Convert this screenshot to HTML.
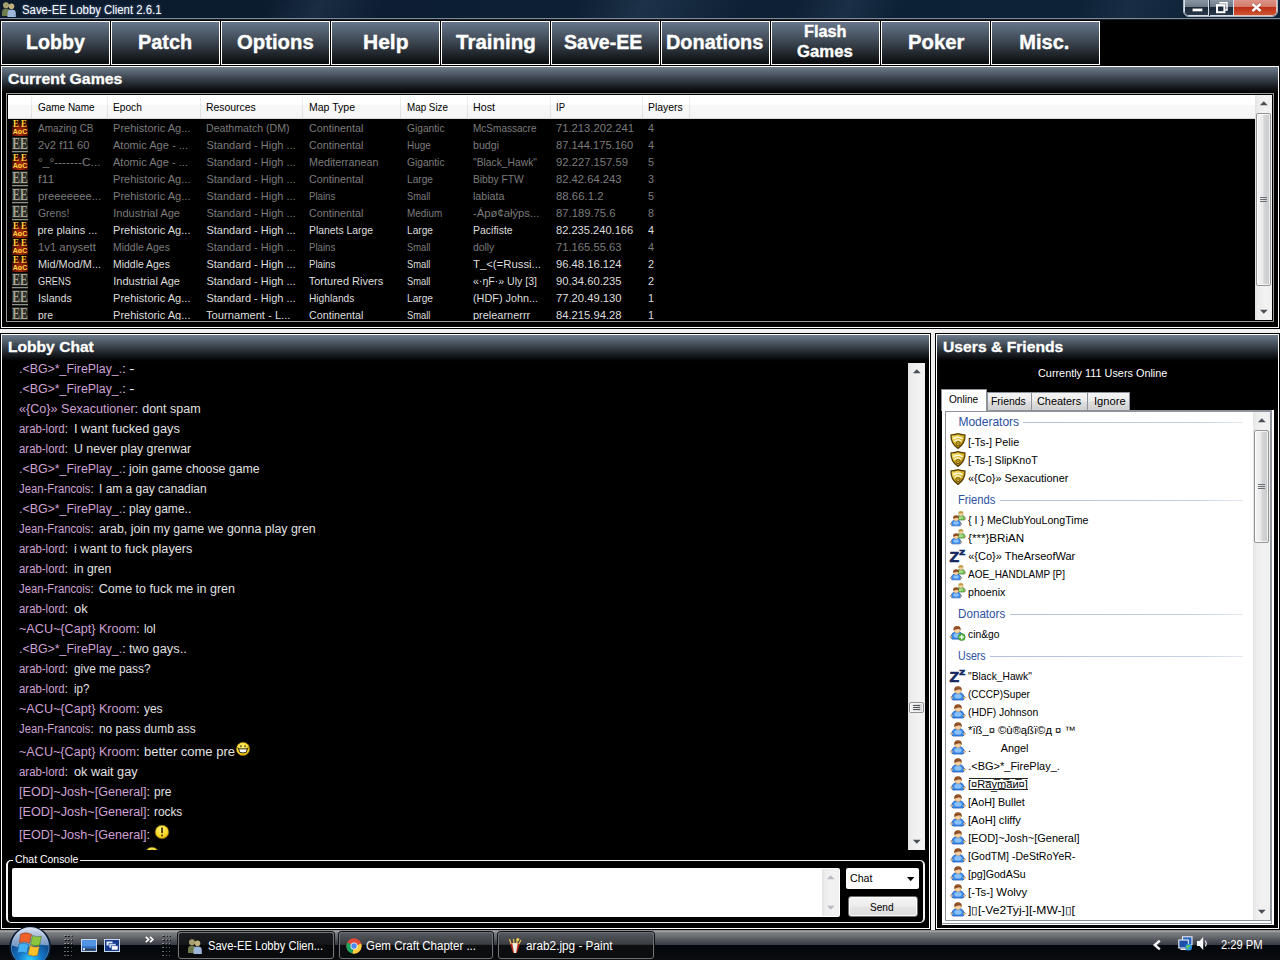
<!DOCTYPE html>
<html lang="en"><head><meta charset="utf-8"><title>Save-EE Lobby Client 2.6.1</title>
<style>
*{margin:0;padding:0;box-sizing:border-box}
html,body{width:1280px;height:960px;overflow:hidden;background:#000}
body{position:relative;font-family:'Liberation Sans',sans-serif;font-size:11px;color:#fff}
.a{position:absolute}
.t{position:absolute;white-space:pre;transform-origin:0 50%;display:block}
svg{position:absolute;overflow:visible}
</style></head>
<body>
<svg width="0" height="0" style="left:0;top:0"><defs><radialGradient id="ag" cx="50%" cy="75%" r="65%"><stop offset="0" stop-color="#c43a06"/><stop offset=".6" stop-color="#6e1402"/><stop offset="1" stop-color="#1c0500"/></radialGradient><radialGradient id="eg" cx="45%" cy="35%" r="70%"><stop offset="0" stop-color="#fff27a"/><stop offset=".7" stop-color="#f4d21f"/><stop offset="1" stop-color="#b98d0a"/></radialGradient><linearGradient id="sg" x1="0" y1="0" x2="1" y2="1"><stop offset="0" stop-color="#f9e873"/><stop offset=".5" stop-color="#e2b822"/><stop offset="1" stop-color="#9a6c08"/></linearGradient></defs></svg>
<div class="a" style="left:0px;top:0px;width:1280px;height:18px;background:linear-gradient(115deg,transparent 0%,transparent 21%,rgba(80,105,135,.2) 25%,transparent 30%,transparent 45%,rgba(80,105,135,.24) 50%,rgba(80,105,135,.12) 54%,transparent 58%,transparent 62%,rgba(80,105,135,.2) 66%,transparent 70%,transparent 84%,rgba(80,105,135,.16) 88%,transparent 93%),linear-gradient(90deg,#0b1a2d 0%,#0d2034 50%,#0e2338 100%)"></div>
<div class="a" style="left:0px;top:18px;width:1280px;height:1px;background:#7f8b98"></div>
<div class="a" style="left:0px;top:19px;width:1280px;height:1px;background:#141c26"></div>
<svg style="left:1px;top:1px" width="16" height="16" viewBox="0 0 16 16"><circle cx="5" cy="4.2" r="3" fill="#a8a070"/><path d="M1 15V11Q1 7.5 5 7.5Q9 7.5 9 11V15Z" fill="#6d7a4a"/><circle cx="10.5" cy="5.2" r="2.8" fill="#c0b27c"/><path d="M6.5 16V12Q6.5 8.6 10.5 8.6Q14.8 8.6 14.8 12V16Z" fill="#9db7d8"/></svg>
<span class="t" style="font:12px 'Liberation Sans',sans-serif;left:21.5px;top:1.5px;height:16px;line-height:16px;color:#fff;transform:scaleX(0.946);text-shadow:0 0 3px rgba(170,200,255,.55);">Save-EE Lobby Client 2.6.1</span>
<div class="a" style="left:1183px;top:-4px;width:95px;height:21px;border:1px solid #aeb9c6;border-radius:0 0 6px 6px;background:#223244;overflow:hidden"><div class="a" style="left:0;top:3px;width:25px;height:16px;border:1px solid #d6dde6;border-top:0;border-radius:0 0 0 4px;background:linear-gradient(#8b96a3 0%,#6f7a88 45%,#1b2939 50%,#28384a 100%)"></div><div class="a" style="left:26px;top:3px;width:24px;height:16px;border:1px solid #d6dde6;border-top:0;border-left:0;background:linear-gradient(#8b96a3 0%,#6f7a88 45%,#1b2939 50%,#28384a 100%)"></div><div class="a" style="left:50px;top:3px;width:43px;height:16px;border:1px solid #e6c4bc;border-top:0;border-left:0;border-radius:0 0 4px 0;background:linear-gradient(#dc9488 0%,#d27a6a 45%,#bd2f14 50%,#cf5434 100%)"></div></div><svg style="left:1191.5px;top:7.5px" width="11" height="4" viewBox="0 0 11 4"><rect x=".3" y=".3" width="10.2" height="3.2" fill="#fff" stroke="#3c4654" stroke-width=".5"/></svg><svg style="left:1215.5px;top:1.5px" width="12" height="11" viewBox="0 0 12 11"><path d="M3.4 .7H11V8H9" fill="none" stroke="#fff" stroke-width="1.5"/><rect x="1" y="3.2" width="7.4" height="7" fill="none" stroke="#fff" stroke-width="2"/></svg><svg style="left:1250.5px;top:2.5px" width="11" height="9" viewBox="0 0 11 9"><path d="M1.4 1L9.6 8M9.6 1L1.4 8" stroke="#4a2018" stroke-width="3.6" opacity=".5"/><path d="M1.4 1L9.6 8M9.6 1L1.4 8" stroke="#fff" stroke-width="2.4"/></svg>
<div class="a" style="left:1px;top:21px;width:109px;height:44px;border:1px solid #fff;background:linear-gradient(#66768b 0%,#3a434d 50%,#090b0d 100%)"></div>
<span class="t" style="font:bold 20px 'Liberation Sans',sans-serif;left:25.6px;top:28.9px;height:26px;line-height:26px;color:#fff;transform:scaleX(0.982);-webkit-text-stroke:.35px #fff;">Lobby</span>
<div class="a" style="left:111px;top:21px;width:109px;height:44px;border:1px solid #fff;background:linear-gradient(#66768b 0%,#3a434d 50%,#090b0d 100%)"></div>
<span class="t" style="font:bold 20px 'Liberation Sans',sans-serif;left:137.8px;top:28.9px;height:26px;line-height:26px;color:#fff;transform:scaleX(0.995);-webkit-text-stroke:.35px #fff;">Patch</span>
<div class="a" style="left:221px;top:21px;width:109px;height:44px;border:1px solid #fff;background:linear-gradient(#66768b 0%,#3a434d 50%,#090b0d 100%)"></div>
<span class="t" style="font:bold 20px 'Liberation Sans',sans-serif;left:236.9px;top:28.9px;height:26px;line-height:26px;color:#fff;transform:scaleX(1.015);-webkit-text-stroke:.35px #fff;">Options</span>
<div class="a" style="left:331px;top:21px;width:109px;height:44px;border:1px solid #fff;background:linear-gradient(#66768b 0%,#3a434d 50%,#090b0d 100%)"></div>
<span class="t" style="font:bold 20px 'Liberation Sans',sans-serif;left:362.7px;top:28.9px;height:26px;line-height:26px;color:#fff;transform:scaleX(1.050);-webkit-text-stroke:.35px #fff;">Help</span>
<div class="a" style="left:441px;top:21px;width:109px;height:44px;border:1px solid #fff;background:linear-gradient(#66768b 0%,#3a434d 50%,#090b0d 100%)"></div>
<span class="t" style="font:bold 20px 'Liberation Sans',sans-serif;left:455.5px;top:28.9px;height:26px;line-height:26px;color:#fff;transform:scaleX(1.026);-webkit-text-stroke:.35px #fff;">Training</span>
<div class="a" style="left:551px;top:21px;width:109px;height:44px;border:1px solid #fff;background:linear-gradient(#66768b 0%,#3a434d 50%,#090b0d 100%)"></div>
<span class="t" style="font:bold 20px 'Liberation Sans',sans-serif;left:564.4px;top:28.9px;height:26px;line-height:26px;color:#fff;transform:scaleX(0.980);-webkit-text-stroke:.35px #fff;">Save-EE</span>
<div class="a" style="left:661px;top:21px;width:109px;height:44px;border:1px solid #fff;background:linear-gradient(#66768b 0%,#3a434d 50%,#090b0d 100%)"></div>
<span class="t" style="font:bold 20px 'Liberation Sans',sans-serif;left:665.9px;top:28.9px;height:26px;line-height:26px;color:#fff;transform:scaleX(0.995);-webkit-text-stroke:.35px #fff;">Donations</span>
<div class="a" style="left:771px;top:21px;width:109px;height:44px;border:1px solid #fff;background:linear-gradient(#66768b 0%,#3a434d 50%,#090b0d 100%)"></div>
<span class="t" style="font:bold 16px 'Liberation Sans',sans-serif;left:803.6px;top:22.2px;height:20px;line-height:20px;color:#fff;transform:scaleX(1.019);-webkit-text-stroke:.35px #fff;">Flash</span>
<span class="t" style="font:bold 16px 'Liberation Sans',sans-serif;left:796.7px;top:42.2px;height:20px;line-height:20px;color:#fff;transform:scaleX(1.044);-webkit-text-stroke:.35px #fff;">Games</span>
<div class="a" style="left:881px;top:21px;width:109px;height:44px;border:1px solid #fff;background:linear-gradient(#66768b 0%,#3a434d 50%,#090b0d 100%)"></div>
<span class="t" style="font:bold 20px 'Liberation Sans',sans-serif;left:907.5px;top:28.9px;height:26px;line-height:26px;color:#fff;transform:scaleX(1.016);-webkit-text-stroke:.35px #fff;">Poker</span>
<div class="a" style="left:991px;top:21px;width:109px;height:44px;border:1px solid #fff;background:linear-gradient(#66768b 0%,#3a434d 50%,#090b0d 100%)"></div>
<span class="t" style="font:bold 20px 'Liberation Sans',sans-serif;left:1019.3px;top:28.9px;height:26px;line-height:26px;color:#fff;-webkit-text-stroke:.35px #fff;">Misc.</span>
<div class="a" style="left:1px;top:66px;width:1278px;height:262px;border:1px solid #fff;background:#000"></div><div class="a" style="left:2px;top:67px;width:1276px;height:26px;background:linear-gradient(#6e7c8d 0%,#56626f 20%,#343c45 50%,#14171b 80%,#000 100%)"></div><span class="t" style="font:bold 15px 'Liberation Sans',sans-serif;left:7.6px;top:67.5px;height:22px;line-height:22px;color:#fff;transform:scaleX(1.055);-webkit-text-stroke:.3px #fff;">Current Games</span>
<div class="a" style="left:1px;top:334px;width:929px;height:595px;border:1px solid #fff;background:#000"></div><div class="a" style="left:2px;top:335px;width:927px;height:26px;background:linear-gradient(#6e7c8d 0%,#56626f 20%,#343c45 50%,#14171b 80%,#000 100%)"></div><span class="t" style="font:bold 15px 'Liberation Sans',sans-serif;left:7.6px;top:335.5px;height:22px;line-height:22px;color:#fff;transform:scaleX(1.040);-webkit-text-stroke:.3px #fff;">Lobby Chat</span>
<div class="a" style="left:936px;top:334px;width:343px;height:595px;border:1px solid #fff;background:#000"></div><div class="a" style="left:937px;top:335px;width:341px;height:26px;background:linear-gradient(#6e7c8d 0%,#56626f 20%,#343c45 50%,#14171b 80%,#000 100%)"></div><span class="t" style="font:bold 15px 'Liberation Sans',sans-serif;left:942.6px;top:335.5px;height:22px;line-height:22px;color:#fff;transform:scaleX(1.046);-webkit-text-stroke:.3px #fff;">Users &amp; Friends</span>
<div class="a" style="left:0px;top:329px;width:1280px;height:4px;background:#f0f0f0"></div>
<div class="a" style="left:931px;top:329px;width:4px;height:601px;background:#f0f0f0"></div>
<div class="a" style="left:6px;top:93px;width:1268px;height:229px;border:1px solid #9a9a9a;background:#000"></div>
<div class="a" style="left:8px;top:95px;width:1247px;height:225px;overflow:hidden"><div class="a" style="left:0px;top:0px;width:1247px;height:24px;background:linear-gradient(#fff 0%,#fff 40%,#f8f8f8 45%,#f5f5f5 100%);border-bottom:1px solid #dadada"></div><div class="a" style="left:23px;top:0px;width:1px;height:23px;background:linear-gradient(#f2f2f2,#dcdcdc)"></div><div class="a" style="left:99px;top:0px;width:1px;height:23px;background:linear-gradient(#f2f2f2,#dcdcdc)"></div><div class="a" style="left:192px;top:0px;width:1px;height:23px;background:linear-gradient(#f2f2f2,#dcdcdc)"></div><div class="a" style="left:294px;top:0px;width:1px;height:23px;background:linear-gradient(#f2f2f2,#dcdcdc)"></div><div class="a" style="left:392px;top:0px;width:1px;height:23px;background:linear-gradient(#f2f2f2,#dcdcdc)"></div><div class="a" style="left:459px;top:0px;width:1px;height:23px;background:linear-gradient(#f2f2f2,#dcdcdc)"></div><div class="a" style="left:542px;top:0px;width:1px;height:23px;background:linear-gradient(#f2f2f2,#dcdcdc)"></div><div class="a" style="left:634px;top:0px;width:1px;height:23px;background:linear-gradient(#f2f2f2,#dcdcdc)"></div><div class="a" style="left:681px;top:0px;width:1px;height:23px;background:linear-gradient(#f2f2f2,#dcdcdc)"></div><span class="t" style="font:11px 'Liberation Sans',sans-serif;left:29.5px;top:4.2px;height:16px;line-height:16px;color:#000;transform:scaleX(0.906);">Game Name</span><span class="t" style="font:11px 'Liberation Sans',sans-serif;left:105.3px;top:4.2px;height:16px;line-height:16px;color:#000;transform:scaleX(0.923);">Epoch</span><span class="t" style="font:11px 'Liberation Sans',sans-serif;left:198.4px;top:4.2px;height:16px;line-height:16px;color:#000;transform:scaleX(0.947);">Resources</span><span class="t" style="font:11px 'Liberation Sans',sans-serif;left:300.7px;top:4.2px;height:16px;line-height:16px;color:#000;transform:scaleX(0.956);">Map Type</span><span class="t" style="font:11px 'Liberation Sans',sans-serif;left:398.9px;top:4.2px;height:16px;line-height:16px;color:#000;transform:scaleX(0.894);">Map Size</span><span class="t" style="font:11px 'Liberation Sans',sans-serif;left:465.4px;top:4.2px;height:16px;line-height:16px;color:#000;transform:scaleX(0.972);">Host</span><span class="t" style="font:11px 'Liberation Sans',sans-serif;left:547.7px;top:4.2px;height:16px;line-height:16px;color:#000;transform:scaleX(0.865);">IP</span><span class="t" style="font:11px 'Liberation Sans',sans-serif;left:640.3px;top:4.2px;height:16px;line-height:16px;color:#000;transform:scaleX(0.946);">Players</span><svg style="left:4px;top:25px" width="16" height="16" viewBox="0 0 16 16"><rect width="16" height="16" fill="url(#ag)"/><text x="8" y="7" text-anchor="middle" font-family="Liberation Serif,serif" font-size="9.5" font-weight="bold" fill="#ffd23c" textLength="14" lengthAdjust="spacingAndGlyphs">E E</text><text x="8" y="14.2" text-anchor="middle" font-family="Liberation Sans,sans-serif" font-size="8" font-weight="bold" fill="#ffd84a" textLength="14.5" lengthAdjust="spacingAndGlyphs">AoC</text></svg><span class="t" style="font:11px 'Liberation Sans',sans-serif;left:29.5px;top:25.3px;height:16px;line-height:16px;color:#7c7c7c;transform:scaleX(0.908);">Amazing CB</span><span class="t" style="font:11px 'Liberation Sans',sans-serif;left:105.3px;top:25.3px;height:16px;line-height:16px;color:#7c7c7c;transform:scaleX(1.006);">Prehistoric Ag...</span><span class="t" style="font:11px 'Liberation Sans',sans-serif;left:198.4px;top:25.3px;height:16px;line-height:16px;color:#7c7c7c;transform:scaleX(0.962);">Deathmatch (DM)</span><span class="t" style="font:11px 'Liberation Sans',sans-serif;left:300.7px;top:25.3px;height:16px;line-height:16px;color:#7c7c7c;transform:scaleX(0.977);">Continental</span><span class="t" style="font:11px 'Liberation Sans',sans-serif;left:398.9px;top:25.3px;height:16px;line-height:16px;color:#7c7c7c;transform:scaleX(0.929);">Gigantic</span><span class="t" style="font:11px 'Liberation Sans',sans-serif;left:465.4px;top:25.3px;height:16px;line-height:16px;color:#7c7c7c;transform:scaleX(0.911);">McSmassacre</span><span class="t" style="font:11px 'Liberation Sans',sans-serif;left:547.7px;top:25.3px;height:16px;line-height:16px;color:#7c7c7c;transform:scaleX(1.020);">71.213.202.241</span><span class="t" style="font:11px 'Liberation Sans',sans-serif;left:640.3px;top:25.3px;height:16px;line-height:16px;color:#7c7c7c;transform:scaleX(0.980);">4</span><svg style="left:4px;top:42px" width="16" height="16" viewBox="0 0 16 16"><rect x="0" y="0" width="16" height="13.4" fill="#2a2b26"/><rect x="0" y="14" width="16" height="1.3" fill="#8f948a"/><text x="8" y="12.4" text-anchor="middle" font-family="Liberation Serif,serif" font-size="17" font-weight="bold" fill="#a5a394" textLength="15.6" lengthAdjust="spacingAndGlyphs">EE</text></svg><span class="t" style="font:11px 'Liberation Sans',sans-serif;left:29.5px;top:42.3px;height:16px;line-height:16px;color:#7c7c7c;transform:scaleX(1.019);">2v2 f11 60</span><span class="t" style="font:11px 'Liberation Sans',sans-serif;left:105.3px;top:42.3px;height:16px;line-height:16px;color:#7c7c7c;transform:scaleX(1.005);">Atomic Age - ...</span><span class="t" style="font:11px 'Liberation Sans',sans-serif;left:198.4px;top:42.3px;height:16px;line-height:16px;color:#7c7c7c;">Standard - High ...</span><span class="t" style="font:11px 'Liberation Sans',sans-serif;left:300.7px;top:42.3px;height:16px;line-height:16px;color:#7c7c7c;transform:scaleX(0.977);">Continental</span><span class="t" style="font:11px 'Liberation Sans',sans-serif;left:398.9px;top:42.3px;height:16px;line-height:16px;color:#7c7c7c;transform:scaleX(0.905);">Huge</span><span class="t" style="font:11px 'Liberation Sans',sans-serif;left:465.4px;top:42.3px;height:16px;line-height:16px;color:#7c7c7c;transform:scaleX(0.966);">budgi</span><span class="t" style="font:11px 'Liberation Sans',sans-serif;left:547.7px;top:42.3px;height:16px;line-height:16px;color:#7c7c7c;transform:scaleX(1.010);">87.144.175.160</span><span class="t" style="font:11px 'Liberation Sans',sans-serif;left:640.3px;top:42.3px;height:16px;line-height:16px;color:#7c7c7c;transform:scaleX(0.980);">4</span><svg style="left:4px;top:59px" width="16" height="16" viewBox="0 0 16 16"><rect width="16" height="16" fill="url(#ag)"/><text x="8" y="7" text-anchor="middle" font-family="Liberation Serif,serif" font-size="9.5" font-weight="bold" fill="#ffd23c" textLength="14" lengthAdjust="spacingAndGlyphs">E E</text><text x="8" y="14.2" text-anchor="middle" font-family="Liberation Sans,sans-serif" font-size="8" font-weight="bold" fill="#ffd84a" textLength="14.5" lengthAdjust="spacingAndGlyphs">AoC</text></svg><span class="t" style="font:11px 'Liberation Sans',sans-serif;left:29.5px;top:59.3px;height:16px;line-height:16px;color:#7c7c7c;transform:scaleX(1.084);">°_°-------C...</span><span class="t" style="font:11px 'Liberation Sans',sans-serif;left:105.3px;top:59.3px;height:16px;line-height:16px;color:#7c7c7c;transform:scaleX(1.005);">Atomic Age - ...</span><span class="t" style="font:11px 'Liberation Sans',sans-serif;left:198.4px;top:59.3px;height:16px;line-height:16px;color:#7c7c7c;">Standard - High ...</span><span class="t" style="font:11px 'Liberation Sans',sans-serif;left:300.7px;top:59.3px;height:16px;line-height:16px;color:#7c7c7c;transform:scaleX(0.978);">Mediterranean</span><span class="t" style="font:11px 'Liberation Sans',sans-serif;left:398.9px;top:59.3px;height:16px;line-height:16px;color:#7c7c7c;transform:scaleX(0.929);">Gigantic</span><span class="t" style="font:11px 'Liberation Sans',sans-serif;left:465.4px;top:59.3px;height:16px;line-height:16px;color:#7c7c7c;transform:scaleX(0.936);">"Black_Hawk"</span><span class="t" style="font:11px 'Liberation Sans',sans-serif;left:547.7px;top:59.3px;height:16px;line-height:16px;color:#7c7c7c;transform:scaleX(1.023);">92.227.157.59</span><span class="t" style="font:11px 'Liberation Sans',sans-serif;left:640.3px;top:59.3px;height:16px;line-height:16px;color:#7c7c7c;transform:scaleX(0.980);">5</span><svg style="left:4px;top:76px" width="16" height="16" viewBox="0 0 16 16"><rect x="0" y="0" width="16" height="13.4" fill="#2a2b26"/><rect x="0" y="14" width="16" height="1.3" fill="#8f948a"/><text x="8" y="12.4" text-anchor="middle" font-family="Liberation Serif,serif" font-size="17" font-weight="bold" fill="#a5a394" textLength="15.6" lengthAdjust="spacingAndGlyphs">EE</text></svg><span class="t" style="font:11px 'Liberation Sans',sans-serif;left:29.5px;top:76.3px;height:16px;line-height:16px;color:#7c7c7c;transform:scaleX(1.125);">f11</span><span class="t" style="font:11px 'Liberation Sans',sans-serif;left:105.3px;top:76.3px;height:16px;line-height:16px;color:#7c7c7c;transform:scaleX(1.006);">Prehistoric Ag...</span><span class="t" style="font:11px 'Liberation Sans',sans-serif;left:198.4px;top:76.3px;height:16px;line-height:16px;color:#7c7c7c;">Standard - High ...</span><span class="t" style="font:11px 'Liberation Sans',sans-serif;left:300.7px;top:76.3px;height:16px;line-height:16px;color:#7c7c7c;transform:scaleX(0.977);">Continental</span><span class="t" style="font:11px 'Liberation Sans',sans-serif;left:398.9px;top:76.3px;height:16px;line-height:16px;color:#7c7c7c;transform:scaleX(0.924);">Large</span><span class="t" style="font:11px 'Liberation Sans',sans-serif;left:465.4px;top:76.3px;height:16px;line-height:16px;color:#7c7c7c;transform:scaleX(0.930);">Bibby FTW</span><span class="t" style="font:11px 'Liberation Sans',sans-serif;left:547.7px;top:76.3px;height:16px;line-height:16px;color:#7c7c7c;transform:scaleX(1.021);">82.42.64.243</span><span class="t" style="font:11px 'Liberation Sans',sans-serif;left:640.3px;top:76.3px;height:16px;line-height:16px;color:#7c7c7c;transform:scaleX(0.980);">3</span><svg style="left:4px;top:93px" width="16" height="16" viewBox="0 0 16 16"><rect x="0" y="0" width="16" height="13.4" fill="#2a2b26"/><rect x="0" y="14" width="16" height="1.3" fill="#8f948a"/><text x="8" y="12.4" text-anchor="middle" font-family="Liberation Serif,serif" font-size="17" font-weight="bold" fill="#a5a394" textLength="15.6" lengthAdjust="spacingAndGlyphs">EE</text></svg><span class="t" style="font:11px 'Liberation Sans',sans-serif;left:29.5px;top:93.3px;height:16px;line-height:16px;color:#7c7c7c;transform:scaleX(1.020);">preeeeeee...</span><span class="t" style="font:11px 'Liberation Sans',sans-serif;left:105.3px;top:93.3px;height:16px;line-height:16px;color:#7c7c7c;transform:scaleX(1.006);">Prehistoric Ag...</span><span class="t" style="font:11px 'Liberation Sans',sans-serif;left:198.4px;top:93.3px;height:16px;line-height:16px;color:#7c7c7c;">Standard - High ...</span><span class="t" style="font:11px 'Liberation Sans',sans-serif;left:300.7px;top:93.3px;height:16px;line-height:16px;color:#7c7c7c;transform:scaleX(0.878);">Plains</span><span class="t" style="font:11px 'Liberation Sans',sans-serif;left:398.9px;top:93.3px;height:16px;line-height:16px;color:#7c7c7c;transform:scaleX(0.850);">Small</span><span class="t" style="font:11px 'Liberation Sans',sans-serif;left:465.4px;top:93.3px;height:16px;line-height:16px;color:#7c7c7c;transform:scaleX(0.965);">labiata</span><span class="t" style="font:11px 'Liberation Sans',sans-serif;left:547.7px;top:93.3px;height:16px;line-height:16px;color:#7c7c7c;transform:scaleX(1.035);">88.66.1.2</span><span class="t" style="font:11px 'Liberation Sans',sans-serif;left:640.3px;top:93.3px;height:16px;line-height:16px;color:#7c7c7c;transform:scaleX(0.980);">5</span><svg style="left:4px;top:110px" width="16" height="16" viewBox="0 0 16 16"><rect x="0" y="0" width="16" height="13.4" fill="#2a2b26"/><rect x="0" y="14" width="16" height="1.3" fill="#8f948a"/><text x="8" y="12.4" text-anchor="middle" font-family="Liberation Serif,serif" font-size="17" font-weight="bold" fill="#a5a394" textLength="15.6" lengthAdjust="spacingAndGlyphs">EE</text></svg><span class="t" style="font:11px 'Liberation Sans',sans-serif;left:29.5px;top:110.3px;height:16px;line-height:16px;color:#7c7c7c;transform:scaleX(0.948);">Grens!</span><span class="t" style="font:11px 'Liberation Sans',sans-serif;left:105.3px;top:110.3px;height:16px;line-height:16px;color:#7c7c7c;">Industrial Age</span><span class="t" style="font:11px 'Liberation Sans',sans-serif;left:198.4px;top:110.3px;height:16px;line-height:16px;color:#7c7c7c;">Standard - High ...</span><span class="t" style="font:11px 'Liberation Sans',sans-serif;left:300.7px;top:110.3px;height:16px;line-height:16px;color:#7c7c7c;transform:scaleX(0.977);">Continental</span><span class="t" style="font:11px 'Liberation Sans',sans-serif;left:398.9px;top:110.3px;height:16px;line-height:16px;color:#7c7c7c;transform:scaleX(0.902);">Medium</span><span class="t" style="font:11px 'Liberation Sans',sans-serif;left:465.4px;top:110.3px;height:16px;line-height:16px;color:#7c7c7c;transform:scaleX(1.023);">-Ápø¢ałýps...</span><span class="t" style="font:11px 'Liberation Sans',sans-serif;left:547.7px;top:110.3px;height:16px;line-height:16px;color:#7c7c7c;transform:scaleX(1.022);">87.189.75.6</span><span class="t" style="font:11px 'Liberation Sans',sans-serif;left:640.3px;top:110.3px;height:16px;line-height:16px;color:#7c7c7c;transform:scaleX(0.980);">8</span><svg style="left:4px;top:127px" width="16" height="16" viewBox="0 0 16 16"><rect width="16" height="16" fill="url(#ag)"/><text x="8" y="7" text-anchor="middle" font-family="Liberation Serif,serif" font-size="9.5" font-weight="bold" fill="#ffd23c" textLength="14" lengthAdjust="spacingAndGlyphs">E E</text><text x="8" y="14.2" text-anchor="middle" font-family="Liberation Sans,sans-serif" font-size="8" font-weight="bold" fill="#ffd84a" textLength="14.5" lengthAdjust="spacingAndGlyphs">AoC</text></svg><span class="t" style="font:11px 'Liberation Sans',sans-serif;left:29.5px;top:127.3px;height:16px;line-height:16px;color:#dedede;">pre plains ...</span><span class="t" style="font:11px 'Liberation Sans',sans-serif;left:105.3px;top:127.3px;height:16px;line-height:16px;color:#dedede;transform:scaleX(1.006);">Prehistoric Ag...</span><span class="t" style="font:11px 'Liberation Sans',sans-serif;left:198.4px;top:127.3px;height:16px;line-height:16px;color:#dedede;">Standard - High ...</span><span class="t" style="font:11px 'Liberation Sans',sans-serif;left:300.7px;top:127.3px;height:16px;line-height:16px;color:#dedede;transform:scaleX(0.943);">Planets Large</span><span class="t" style="font:11px 'Liberation Sans',sans-serif;left:398.9px;top:127.3px;height:16px;line-height:16px;color:#dedede;transform:scaleX(0.924);">Large</span><span class="t" style="font:11px 'Liberation Sans',sans-serif;left:465.4px;top:127.3px;height:16px;line-height:16px;color:#dedede;transform:scaleX(0.955);">Pacifiste</span><span class="t" style="font:11px 'Liberation Sans',sans-serif;left:547.7px;top:127.3px;height:16px;line-height:16px;color:#dedede;transform:scaleX(1.010);">82.235.240.166</span><span class="t" style="font:11px 'Liberation Sans',sans-serif;left:640.3px;top:127.3px;height:16px;line-height:16px;color:#dedede;transform:scaleX(0.980);">4</span><svg style="left:4px;top:144px" width="16" height="16" viewBox="0 0 16 16"><rect width="16" height="16" fill="url(#ag)"/><text x="8" y="7" text-anchor="middle" font-family="Liberation Serif,serif" font-size="9.5" font-weight="bold" fill="#ffd23c" textLength="14" lengthAdjust="spacingAndGlyphs">E E</text><text x="8" y="14.2" text-anchor="middle" font-family="Liberation Sans,sans-serif" font-size="8" font-weight="bold" fill="#ffd84a" textLength="14.5" lengthAdjust="spacingAndGlyphs">AoC</text></svg><span class="t" style="font:11px 'Liberation Sans',sans-serif;left:29.5px;top:144.3px;height:16px;line-height:16px;color:#7c7c7c;transform:scaleX(1.027);">1v1 anysett</span><span class="t" style="font:11px 'Liberation Sans',sans-serif;left:105.3px;top:144.3px;height:16px;line-height:16px;color:#7c7c7c;transform:scaleX(0.949);">Middle Ages</span><span class="t" style="font:11px 'Liberation Sans',sans-serif;left:198.4px;top:144.3px;height:16px;line-height:16px;color:#7c7c7c;">Standard - High ...</span><span class="t" style="font:11px 'Liberation Sans',sans-serif;left:300.7px;top:144.3px;height:16px;line-height:16px;color:#7c7c7c;transform:scaleX(0.878);">Plains</span><span class="t" style="font:11px 'Liberation Sans',sans-serif;left:398.9px;top:144.3px;height:16px;line-height:16px;color:#7c7c7c;transform:scaleX(0.850);">Small</span><span class="t" style="font:11px 'Liberation Sans',sans-serif;left:465.4px;top:144.3px;height:16px;line-height:16px;color:#7c7c7c;transform:scaleX(0.941);">dolly</span><span class="t" style="font:11px 'Liberation Sans',sans-serif;left:547.7px;top:144.3px;height:16px;line-height:16px;color:#7c7c7c;transform:scaleX(1.021);">71.165.55.63</span><span class="t" style="font:11px 'Liberation Sans',sans-serif;left:640.3px;top:144.3px;height:16px;line-height:16px;color:#7c7c7c;transform:scaleX(0.980);">4</span><svg style="left:4px;top:161px" width="16" height="16" viewBox="0 0 16 16"><rect width="16" height="16" fill="url(#ag)"/><text x="8" y="7" text-anchor="middle" font-family="Liberation Serif,serif" font-size="9.5" font-weight="bold" fill="#ffd23c" textLength="14" lengthAdjust="spacingAndGlyphs">E E</text><text x="8" y="14.2" text-anchor="middle" font-family="Liberation Sans,sans-serif" font-size="8" font-weight="bold" fill="#ffd84a" textLength="14.5" lengthAdjust="spacingAndGlyphs">AoC</text></svg><span class="t" style="font:11px 'Liberation Sans',sans-serif;left:29.5px;top:161.3px;height:16px;line-height:16px;color:#dedede;transform:scaleX(0.991);">Mid/Mod/M...</span><span class="t" style="font:11px 'Liberation Sans',sans-serif;left:105.3px;top:161.3px;height:16px;line-height:16px;color:#dedede;transform:scaleX(0.949);">Middle Ages</span><span class="t" style="font:11px 'Liberation Sans',sans-serif;left:198.4px;top:161.3px;height:16px;line-height:16px;color:#dedede;">Standard - High ...</span><span class="t" style="font:11px 'Liberation Sans',sans-serif;left:300.7px;top:161.3px;height:16px;line-height:16px;color:#dedede;transform:scaleX(0.878);">Plains</span><span class="t" style="font:11px 'Liberation Sans',sans-serif;left:398.9px;top:161.3px;height:16px;line-height:16px;color:#dedede;transform:scaleX(0.850);">Small</span><span class="t" style="font:11px 'Liberation Sans',sans-serif;left:465.4px;top:161.3px;height:16px;line-height:16px;color:#dedede;transform:scaleX(1.030);">T_&lt;(=Russi...</span><span class="t" style="font:11px 'Liberation Sans',sans-serif;left:547.7px;top:161.3px;height:16px;line-height:16px;color:#dedede;transform:scaleX(1.021);">96.48.16.124</span><span class="t" style="font:11px 'Liberation Sans',sans-serif;left:640.3px;top:161.3px;height:16px;line-height:16px;color:#dedede;transform:scaleX(0.980);">2</span><svg style="left:4px;top:178px" width="16" height="16" viewBox="0 0 16 16"><rect x="0" y="0" width="16" height="13.4" fill="#2a2b26"/><rect x="0" y="14" width="16" height="1.3" fill="#8f948a"/><text x="8" y="12.4" text-anchor="middle" font-family="Liberation Serif,serif" font-size="17" font-weight="bold" fill="#a5a394" textLength="15.6" lengthAdjust="spacingAndGlyphs">EE</text></svg><span class="t" style="font:11px 'Liberation Sans',sans-serif;left:29.5px;top:178.3px;height:16px;line-height:16px;color:#dedede;transform:scaleX(0.838);">GRENS</span><span class="t" style="font:11px 'Liberation Sans',sans-serif;left:105.3px;top:178.3px;height:16px;line-height:16px;color:#dedede;">Industrial Age</span><span class="t" style="font:11px 'Liberation Sans',sans-serif;left:198.4px;top:178.3px;height:16px;line-height:16px;color:#dedede;">Standard - High ...</span><span class="t" style="font:11px 'Liberation Sans',sans-serif;left:300.7px;top:178.3px;height:16px;line-height:16px;color:#dedede;">Tortured Rivers</span><span class="t" style="font:11px 'Liberation Sans',sans-serif;left:398.9px;top:178.3px;height:16px;line-height:16px;color:#dedede;transform:scaleX(0.850);">Small</span><span class="t" style="font:11px 'Liberation Sans',sans-serif;left:465.4px;top:178.3px;height:16px;line-height:16px;color:#dedede;transform:scaleX(0.960);">«·ŋF·» Uly [3]</span><span class="t" style="font:11px 'Liberation Sans',sans-serif;left:547.7px;top:178.3px;height:16px;line-height:16px;color:#dedede;transform:scaleX(1.021);">90.34.60.235</span><span class="t" style="font:11px 'Liberation Sans',sans-serif;left:640.3px;top:178.3px;height:16px;line-height:16px;color:#dedede;transform:scaleX(0.980);">2</span><svg style="left:4px;top:195px" width="16" height="16" viewBox="0 0 16 16"><rect x="0" y="0" width="16" height="13.4" fill="#2a2b26"/><rect x="0" y="14" width="16" height="1.3" fill="#8f948a"/><text x="8" y="12.4" text-anchor="middle" font-family="Liberation Serif,serif" font-size="17" font-weight="bold" fill="#a5a394" textLength="15.6" lengthAdjust="spacingAndGlyphs">EE</text></svg><span class="t" style="font:11px 'Liberation Sans',sans-serif;left:29.5px;top:195.3px;height:16px;line-height:16px;color:#dedede;transform:scaleX(0.970);">Islands</span><span class="t" style="font:11px 'Liberation Sans',sans-serif;left:105.3px;top:195.3px;height:16px;line-height:16px;color:#dedede;transform:scaleX(1.006);">Prehistoric Ag...</span><span class="t" style="font:11px 'Liberation Sans',sans-serif;left:198.4px;top:195.3px;height:16px;line-height:16px;color:#dedede;">Standard - High ...</span><span class="t" style="font:11px 'Liberation Sans',sans-serif;left:300.7px;top:195.3px;height:16px;line-height:16px;color:#dedede;transform:scaleX(0.926);">Highlands</span><span class="t" style="font:11px 'Liberation Sans',sans-serif;left:398.9px;top:195.3px;height:16px;line-height:16px;color:#dedede;transform:scaleX(0.924);">Large</span><span class="t" style="font:11px 'Liberation Sans',sans-serif;left:465.4px;top:195.3px;height:16px;line-height:16px;color:#dedede;transform:scaleX(0.985);">(HDF) John...</span><span class="t" style="font:11px 'Liberation Sans',sans-serif;left:547.7px;top:195.3px;height:16px;line-height:16px;color:#dedede;transform:scaleX(1.021);">77.20.49.130</span><span class="t" style="font:11px 'Liberation Sans',sans-serif;left:640.3px;top:195.3px;height:16px;line-height:16px;color:#dedede;transform:scaleX(0.980);">1</span><svg style="left:4px;top:212px" width="16" height="16" viewBox="0 0 16 16"><rect x="0" y="0" width="16" height="13.4" fill="#2a2b26"/><rect x="0" y="14" width="16" height="1.3" fill="#8f948a"/><text x="8" y="12.4" text-anchor="middle" font-family="Liberation Serif,serif" font-size="17" font-weight="bold" fill="#a5a394" textLength="15.6" lengthAdjust="spacingAndGlyphs">EE</text></svg><span class="t" style="font:11px 'Liberation Sans',sans-serif;left:29.5px;top:212.3px;height:16px;line-height:16px;color:#dedede;transform:scaleX(0.943);">pre</span><span class="t" style="font:11px 'Liberation Sans',sans-serif;left:105.3px;top:212.3px;height:16px;line-height:16px;color:#dedede;transform:scaleX(1.006);">Prehistoric Ag...</span><span class="t" style="font:11px 'Liberation Sans',sans-serif;left:198.4px;top:212.3px;height:16px;line-height:16px;color:#dedede;transform:scaleX(1.015);">Tournament - L...</span><span class="t" style="font:11px 'Liberation Sans',sans-serif;left:300.7px;top:212.3px;height:16px;line-height:16px;color:#dedede;transform:scaleX(0.977);">Continental</span><span class="t" style="font:11px 'Liberation Sans',sans-serif;left:398.9px;top:212.3px;height:16px;line-height:16px;color:#dedede;transform:scaleX(0.850);">Small</span><span class="t" style="font:11px 'Liberation Sans',sans-serif;left:465.4px;top:212.3px;height:16px;line-height:16px;color:#dedede;transform:scaleX(0.995);">prelearnerrr</span><span class="t" style="font:11px 'Liberation Sans',sans-serif;left:547.7px;top:212.3px;height:16px;line-height:16px;color:#dedede;transform:scaleX(1.021);">84.215.94.28</span><span class="t" style="font:11px 'Liberation Sans',sans-serif;left:640.3px;top:212.3px;height:16px;line-height:16px;color:#dedede;transform:scaleX(0.980);">1</span></div>
<div class="a" style="left:1255px;top:95px;width:17px;height:225px;background:linear-gradient(90deg,#e3e3e3 0%,#ededed 20%,#f2f2f2 60%,#f0f0f0 100%)"><svg style="left:0;top:0" width="17" height="17" viewBox="0 0 17 17"><path d="M4.9 10.2L8.8 6.2L12.7 10.2Z" fill="#4a4f58"/></svg><svg style="left:0;top:208px" width="17" height="17" viewBox="0 0 17 17"><path d="M4.9 6.8L8.8 10.8L12.7 6.8Z" fill="#4a4f58"/></svg><div class="a" style="left:1px;top:18px;width:15px;height:173px;border:1px solid #959595;border-radius:2px;background:linear-gradient(90deg,#f6f6f6 0%,#e9e9ea 45%,#d4d5d7 55%,#c9cacc 100%);box-shadow:inset 0 0 0 1px rgba(255,255,255,.7)"></div><div class="a" style="left:5px;top:102px;width:7px;height:1px;background:#6b6f75"></div><div class="a" style="left:5px;top:104px;width:7px;height:1px;background:#6b6f75"></div><div class="a" style="left:5px;top:106px;width:7px;height:1px;background:#6b6f75"></div></div>
<div class="a" style="left:0px;top:0px;width:931px;height:850px;overflow:hidden"><span class="t" style="font:12.5px 'Liberation Sans',sans-serif;left:18.8px;top:358.5px;height:20px;line-height:20px;color:#cfa2d4;transform:scaleX(0.990);">.&lt;BG&gt;*_FirePlay_.<span style="color:#e2e2e2">:</span></span><span class="t" style="font:12.5px 'Liberation Sans',sans-serif;left:128.6px;top:358.5px;height:20px;line-height:20px;color:#e2e2e2;transform:scaleX(1.342);">-</span><span class="t" style="font:12.5px 'Liberation Sans',sans-serif;left:18.8px;top:378.5px;height:20px;line-height:20px;color:#cfa2d4;transform:scaleX(0.990);">.&lt;BG&gt;*_FirePlay_.<span style="color:#e2e2e2">:</span></span><span class="t" style="font:12.5px 'Liberation Sans',sans-serif;left:128.6px;top:378.5px;height:20px;line-height:20px;color:#e2e2e2;transform:scaleX(1.342);">-</span><span class="t" style="font:12.5px 'Liberation Sans',sans-serif;left:18.8px;top:398.5px;height:20px;line-height:20px;color:#cfa2d4;transform:scaleX(1.008);">«{Co}» Sexacutioner<span style="color:#e2e2e2">:</span></span><span class="t" style="font:12.5px 'Liberation Sans',sans-serif;left:142.2px;top:398.5px;height:20px;line-height:20px;color:#e2e2e2;">dont spam</span><span class="t" style="font:12.5px 'Liberation Sans',sans-serif;left:18.8px;top:418.5px;height:20px;line-height:20px;color:#cfa2d4;transform:scaleX(0.912);">arab-lord<span style="color:#e2e2e2">:</span></span><span class="t" style="font:12.5px 'Liberation Sans',sans-serif;left:73.6px;top:418.5px;height:20px;line-height:20px;color:#e2e2e2;transform:scaleX(1.022);">I want fucked gays</span><span class="t" style="font:12.5px 'Liberation Sans',sans-serif;left:18.8px;top:438.5px;height:20px;line-height:20px;color:#cfa2d4;transform:scaleX(0.912);">arab-lord<span style="color:#e2e2e2">:</span></span><span class="t" style="font:12.5px 'Liberation Sans',sans-serif;left:73.8px;top:438.5px;height:20px;line-height:20px;color:#e2e2e2;transform:scaleX(0.986);">U never play grenwar</span><span class="t" style="font:12.5px 'Liberation Sans',sans-serif;left:18.8px;top:458.5px;height:20px;line-height:20px;color:#cfa2d4;transform:scaleX(0.990);">.&lt;BG&gt;*_FirePlay_.<span style="color:#e2e2e2">:</span></span><span class="t" style="font:12.5px 'Liberation Sans',sans-serif;left:128.6px;top:458.5px;height:20px;line-height:20px;color:#e2e2e2;transform:scaleX(0.984);">join game choose game</span><span class="t" style="font:12.5px 'Liberation Sans',sans-serif;left:18.8px;top:478.5px;height:20px;line-height:20px;color:#cfa2d4;transform:scaleX(0.903);">Jean-Francois<span style="color:#e2e2e2">:</span></span><span class="t" style="font:12.5px 'Liberation Sans',sans-serif;left:98.8px;top:478.5px;height:20px;line-height:20px;color:#e2e2e2;transform:scaleX(0.956);">I am a gay canadian</span><span class="t" style="font:12.5px 'Liberation Sans',sans-serif;left:18.8px;top:498.5px;height:20px;line-height:20px;color:#cfa2d4;transform:scaleX(0.990);">.&lt;BG&gt;*_FirePlay_.<span style="color:#e2e2e2">:</span></span><span class="t" style="font:12.5px 'Liberation Sans',sans-serif;left:129.1px;top:498.5px;height:20px;line-height:20px;color:#e2e2e2;transform:scaleX(0.964);">play game..</span><span class="t" style="font:12.5px 'Liberation Sans',sans-serif;left:18.8px;top:518.5px;height:20px;line-height:20px;color:#cfa2d4;transform:scaleX(0.903);">Jean-Francois<span style="color:#e2e2e2">:</span></span><span class="t" style="font:12.5px 'Liberation Sans',sans-serif;left:98.8px;top:518.5px;height:20px;line-height:20px;color:#e2e2e2;transform:scaleX(0.990);">arab, join my game we gonna play gren</span><span class="t" style="font:12.5px 'Liberation Sans',sans-serif;left:18.8px;top:538.5px;height:20px;line-height:20px;color:#cfa2d4;transform:scaleX(0.912);">arab-lord<span style="color:#e2e2e2">:</span></span><span class="t" style="font:12.5px 'Liberation Sans',sans-serif;left:74px;top:538.5px;height:20px;line-height:20px;color:#e2e2e2;transform:scaleX(1.014);">i want to fuck players</span><span class="t" style="font:12.5px 'Liberation Sans',sans-serif;left:18.8px;top:558.5px;height:20px;line-height:20px;color:#cfa2d4;transform:scaleX(0.912);">arab-lord<span style="color:#e2e2e2">:</span></span><span class="t" style="font:12.5px 'Liberation Sans',sans-serif;left:74px;top:558.5px;height:20px;line-height:20px;color:#e2e2e2;transform:scaleX(0.978);">in gren</span><span class="t" style="font:12.5px 'Liberation Sans',sans-serif;left:18.8px;top:578.5px;height:20px;line-height:20px;color:#cfa2d4;transform:scaleX(0.903);">Jean-Francois<span style="color:#e2e2e2">:</span></span><span class="t" style="font:12.5px 'Liberation Sans',sans-serif;left:98.8px;top:578.5px;height:20px;line-height:20px;color:#e2e2e2;">Come to fuck me in gren</span><span class="t" style="font:12.5px 'Liberation Sans',sans-serif;left:18.8px;top:598.5px;height:20px;line-height:20px;color:#cfa2d4;transform:scaleX(0.912);">arab-lord<span style="color:#e2e2e2">:</span></span><span class="t" style="font:12.5px 'Liberation Sans',sans-serif;left:73.8px;top:598.5px;height:20px;line-height:20px;color:#e2e2e2;transform:scaleX(1.030);">ok</span><span class="t" style="font:12.5px 'Liberation Sans',sans-serif;left:18.8px;top:618.5px;height:20px;line-height:20px;color:#cfa2d4;transform:scaleX(1.009);">~ACU~{Capt} Kroom<span style="color:#e2e2e2">:</span></span><span class="t" style="font:12.5px 'Liberation Sans',sans-serif;left:143.8px;top:618.5px;height:20px;line-height:20px;color:#e2e2e2;transform:scaleX(0.927);">lol</span><span class="t" style="font:12.5px 'Liberation Sans',sans-serif;left:18.8px;top:638.5px;height:20px;line-height:20px;color:#cfa2d4;transform:scaleX(0.990);">.&lt;BG&gt;*_FirePlay_.<span style="color:#e2e2e2">:</span></span><span class="t" style="font:12.5px 'Liberation Sans',sans-serif;left:129.1px;top:638.5px;height:20px;line-height:20px;color:#e2e2e2;transform:scaleX(1.027);">two gays..</span><span class="t" style="font:12.5px 'Liberation Sans',sans-serif;left:18.8px;top:658.5px;height:20px;line-height:20px;color:#cfa2d4;transform:scaleX(0.912);">arab-lord<span style="color:#e2e2e2">:</span></span><span class="t" style="font:12.5px 'Liberation Sans',sans-serif;left:73.8px;top:658.5px;height:20px;line-height:20px;color:#e2e2e2;transform:scaleX(0.950);">give me pass?</span><span class="t" style="font:12.5px 'Liberation Sans',sans-serif;left:18.8px;top:678.5px;height:20px;line-height:20px;color:#cfa2d4;transform:scaleX(0.912);">arab-lord<span style="color:#e2e2e2">:</span></span><span class="t" style="font:12.5px 'Liberation Sans',sans-serif;left:74px;top:678.5px;height:20px;line-height:20px;color:#e2e2e2;transform:scaleX(0.923);">ip?</span><span class="t" style="font:12.5px 'Liberation Sans',sans-serif;left:18.8px;top:698.5px;height:20px;line-height:20px;color:#cfa2d4;transform:scaleX(1.009);">~ACU~{Capt} Kroom<span style="color:#e2e2e2">:</span></span><span class="t" style="font:12.5px 'Liberation Sans',sans-serif;left:143.8px;top:698.5px;height:20px;line-height:20px;color:#e2e2e2;transform:scaleX(0.956);">yes</span><span class="t" style="font:12.5px 'Liberation Sans',sans-serif;left:18.8px;top:718.5px;height:20px;line-height:20px;color:#cfa2d4;transform:scaleX(0.903);">Jean-Francois<span style="color:#e2e2e2">:</span></span><span class="t" style="font:12.5px 'Liberation Sans',sans-serif;left:98.8px;top:718.5px;height:20px;line-height:20px;color:#e2e2e2;transform:scaleX(0.952);">no pass dumb ass</span><span class="t" style="font:12.5px 'Liberation Sans',sans-serif;left:18.8px;top:742px;height:20px;line-height:20px;color:#cfa2d4;transform:scaleX(1.009);">~ACU~{Capt} Kroom<span style="color:#e2e2e2">:</span></span><span class="t" style="font:12.5px 'Liberation Sans',sans-serif;left:143.8px;top:742px;height:20px;line-height:20px;color:#e2e2e2;transform:scaleX(1.039);">better come pre</span><span class="t" style="font:12.5px 'Liberation Sans',sans-serif;left:18.8px;top:761.8px;height:20px;line-height:20px;color:#cfa2d4;transform:scaleX(0.912);">arab-lord<span style="color:#e2e2e2">:</span></span><span class="t" style="font:12.5px 'Liberation Sans',sans-serif;left:73.8px;top:761.8px;height:20px;line-height:20px;color:#e2e2e2;transform:scaleX(1.017);">ok wait gay</span><span class="t" style="font:12.5px 'Liberation Sans',sans-serif;left:18.8px;top:781.9px;height:20px;line-height:20px;color:#cfa2d4;transform:scaleX(1.008);">[EOD]~Josh~[General]<span style="color:#e2e2e2">:</span></span><span class="t" style="font:12.5px 'Liberation Sans',sans-serif;left:154.1px;top:781.9px;height:20px;line-height:20px;color:#e2e2e2;transform:scaleX(0.957);">pre</span><span class="t" style="font:12.5px 'Liberation Sans',sans-serif;left:18.8px;top:802px;height:20px;line-height:20px;color:#cfa2d4;transform:scaleX(1.008);">[EOD]~Josh~[General]<span style="color:#e2e2e2">:</span></span><span class="t" style="font:12.5px 'Liberation Sans',sans-serif;left:154.1px;top:802px;height:20px;line-height:20px;color:#e2e2e2;transform:scaleX(0.947);">rocks</span><span class="t" style="font:12.5px 'Liberation Sans',sans-serif;left:18.8px;top:824.6px;height:20px;line-height:20px;color:#cfa2d4;transform:scaleX(1.008);">[EOD]~Josh~[General]<span style="color:#e2e2e2">:</span></span><svg style="left:235.8px;top:741.7px" width="14" height="14" viewBox="0 0 14 14"><circle cx="7" cy="7" r="6.7" fill="url(#eg)" stroke="#8a6a08" stroke-width=".5"/><ellipse cx="5" cy="4.3" rx=".65" ry="1.15" fill="#2a1e03"/><ellipse cx="9" cy="4.3" rx=".65" ry="1.15" fill="#2a1e03"/><path d="M2.6 6.9H11.4L10.2 10.3Q7 11.6 3.8 10.3Z" fill="#fff" stroke="#231803" stroke-width=".9" stroke-linejoin="round"/><path d="M2.6 6.9L1.9 5.7M11.4 6.9L12.1 5.7" stroke="#231803" stroke-width=".9" stroke-linecap="round"/></svg><svg style="left:154.8px;top:824.9px" width="14" height="14" viewBox="0 0 14 14"><circle cx="7" cy="7" r="6.8" fill="url(#eg)" stroke="#8a6a08" stroke-width=".5"/><rect x="6.2" y="2.6" width="1.7" height="5.6" rx=".6" fill="#3a2a05"/><rect x="6.2" y="9.4" width="1.7" height="1.8" rx=".5" fill="#3a2a05"/></svg><svg style="left:144.8px;top:847.2px" width="14" height="14" viewBox="0 0 14 14"><circle cx="7" cy="7" r="6.8" fill="url(#eg)" stroke="#8a6a08" stroke-width=".5"/><rect x="6.2" y="2.6" width="1.7" height="5.6" rx=".6" fill="#3a2a05"/><rect x="6.2" y="9.4" width="1.7" height="1.8" rx=".5" fill="#3a2a05"/></svg></div>
<div class="a" style="left:908px;top:363px;width:17px;height:487px;background:linear-gradient(90deg,#e3e3e3 0%,#ededed 20%,#f2f2f2 60%,#f0f0f0 100%)"><svg style="left:0;top:0" width="17" height="17" viewBox="0 0 17 17"><path d="M4.9 10.2L8.8 6.2L12.7 10.2Z" fill="#4a4f58"/></svg><svg style="left:0;top:470px" width="17" height="17" viewBox="0 0 17 17"><path d="M4.9 6.8L8.8 10.8L12.7 6.8Z" fill="#4a4f58"/></svg></div>
<div class="a" style="left:909px;top:702px;width:15px;height:11px;border:1px solid #8f9297;border-radius:2px;background:linear-gradient(90deg,#f4f4f4,#dcdddf 55%,#cfd0d2);box-shadow:inset 0 0 0 1px rgba(255,255,255,.7)"><div class="a" style="left:3px;top:2px;width:7px;height:1px;background:#55585d"></div><div class="a" style="left:3px;top:4px;width:7px;height:1px;background:#55585d"></div><div class="a" style="left:3px;top:6px;width:7px;height:1px;background:#55585d"></div></div>
<div class="a" style="left:6px;top:859.5px;width:918.5px;height:63px;border:2px solid #f4f4f4;border-top-width:1.5px;border-bottom-width:1.5px;border-radius:5px"></div>
<div class="a" style="left:13px;top:853px;width:67px;height:12px;background:#000"></div>
<span class="t" style="font:11px 'Liberation Sans',sans-serif;left:15px;top:852px;height:14px;line-height:14px;color:#fff;transform:scaleX(0.950);">Chat Console</span>
<div class="a" style="left:12px;top:868px;width:828px;height:49px;background:#fff;border-radius:2px"></div>
<div class="a" style="left:822px;top:869px;width:17px;height:47px;background:linear-gradient(90deg,#e3e3e3 0%,#ededed 20%,#f2f2f2 60%,#f0f0f0 100%)"><svg style="left:0;top:0" width="17" height="17" viewBox="0 0 17 17"><path d="M4.9 10.2L8.8 6.2L12.7 10.2Z" fill="#b8bcc2"/></svg><svg style="left:0;top:30px" width="17" height="17" viewBox="0 0 17 17"><path d="M4.9 6.8L8.8 10.8L12.7 6.8Z" fill="#b8bcc2"/></svg></div>
<div class="a" style="left:846px;top:868px;width:73px;height:21px;background:#fff;border-radius:2px"></div>
<span class="t" style="font:11px 'Liberation Sans',sans-serif;left:849.5px;top:871.3px;height:14px;line-height:14px;color:#000;transform:scaleX(0.968);">Chat</span>
<svg style="left:906.5px;top:877px" width="7.4" height="4.4" viewBox="0 0 7.4 4.4"><path d="M0 0H7.4L3.7 4.2Z" fill="#000"/></svg>
<div class="a" style="left:847.5px;top:896px;width:70px;height:20.5px;background:linear-gradient(#f3f3f3 0%,#eeeeee 48%,#e4e4e4 52%,#dcdcdc 100%);border:1px solid #6c6c6c;border-radius:3px;box-shadow:inset 0 0 0 1px #fbfbfb"></div>
<span class="t" style="font:11px 'Liberation Sans',sans-serif;left:869.8px;top:899.6px;height:14px;line-height:14px;color:#000;transform:scaleX(0.914);">Send</span>
<span class="t" style="font:11px 'Liberation Sans',sans-serif;left:1038.2px;top:365.9px;height:14px;line-height:14px;color:#fff;transform:scaleX(0.987);">Currently 111 Users Online</span>
<div class="a" style="left:942px;top:410px;width:332px;height:515px;background:#fff"></div>
<div class="a" style="left:942px;top:410px;width:330px;height:514px;border:1px solid #8e929b;border-left-color:#fff"></div>
<div class="a" style="left:987px;top:392px;width:45px;height:18px;background:linear-gradient(#f4f4f4 0%,#ececec 45%,#dedede 55%,#cfcfcf 100%);border:1px solid #8e929b;border-bottom:0"></div><span class="t" style="font:11px 'Liberation Sans',sans-serif;left:990.6px;top:394.2px;height:14px;line-height:14px;color:#000;transform:scaleX(0.946);">Friends</span>
<div class="a" style="left:1031px;top:392px;width:57px;height:18px;background:linear-gradient(#f4f4f4 0%,#ececec 45%,#dedede 55%,#cfcfcf 100%);border:1px solid #8e929b;border-bottom:0"></div><span class="t" style="font:11px 'Liberation Sans',sans-serif;left:1037.4px;top:394.2px;height:14px;line-height:14px;color:#000;transform:scaleX(0.990);">Cheaters</span>
<div class="a" style="left:1087px;top:392px;width:43px;height:18px;background:linear-gradient(#f4f4f4 0%,#ececec 45%,#dedede 55%,#cfcfcf 100%);border:1px solid #8e929b;border-bottom:0"></div><span class="t" style="font:11px 'Liberation Sans',sans-serif;left:1093.7px;top:394.2px;height:14px;line-height:14px;color:#000;transform:scaleX(1.013);">Ignore</span>
<div class="a" style="left:941px;top:389px;width:46px;height:22px;background:#fff;border:1px solid #8e929b;border-bottom:0"></div><span class="t" style="font:11px 'Liberation Sans',sans-serif;left:948.9px;top:392.3px;height:14px;line-height:14px;color:#000;transform:scaleX(0.918);">Online</span>
<div class="a" style="left:945px;top:411px;width:326px;height:510px;border:1px solid #8e929b;background:#fff"></div>
<span class="t" style="font:12px 'Liberation Sans',sans-serif;left:958.4px;top:414px;height:16px;line-height:16px;color:#2c50a2;">Moderators</span>
<div class="a" style="left:1023px;top:422px;width:220px;height:1px;background:linear-gradient(90deg,#b4c0da 0%,#c6d0e4 80%,#e6ebf4 100%)"></div>
<svg style="left:950px;top:433px" width="16" height="16" viewBox="0 0 16 16"><path d="M8 0.7Q11.4 2 15 1.8Q15.4 10.6 8 15.4Q0.6 10.6 1 1.8Q4.6 2 8 0.7Z" fill="url(#sg)" stroke="#5a4206" stroke-width="1.3" stroke-linejoin="round"/><path d="M3.9 5.5Q8 2.8 12.1 5.5" fill="none" stroke="#fffbe6" stroke-width="1.5" stroke-linecap="round"/><path d="M4.9 8Q8 5.8 11.1 8" fill="none" stroke="#fffbe6" stroke-width="1.3" stroke-linecap="round"/><circle cx="8" cy="10.7" r="2" fill="#f6d640" stroke="#5a4206" stroke-width=".9"/><circle cx="8" cy="10.7" r=".7" fill="#5a4206"/></svg>
<span class="t" style="font:11px 'Liberation Sans',sans-serif;left:968.2px;top:433.8px;height:16px;line-height:16px;color:#000;transform:scaleX(0.985);">[-Ts-] Pelie</span>
<svg style="left:950px;top:451px" width="16" height="16" viewBox="0 0 16 16"><path d="M8 0.7Q11.4 2 15 1.8Q15.4 10.6 8 15.4Q0.6 10.6 1 1.8Q4.6 2 8 0.7Z" fill="url(#sg)" stroke="#5a4206" stroke-width="1.3" stroke-linejoin="round"/><path d="M3.9 5.5Q8 2.8 12.1 5.5" fill="none" stroke="#fffbe6" stroke-width="1.5" stroke-linecap="round"/><path d="M4.9 8Q8 5.8 11.1 8" fill="none" stroke="#fffbe6" stroke-width="1.3" stroke-linecap="round"/><circle cx="8" cy="10.7" r="2" fill="#f6d640" stroke="#5a4206" stroke-width=".9"/><circle cx="8" cy="10.7" r=".7" fill="#5a4206"/></svg>
<span class="t" style="font:11px 'Liberation Sans',sans-serif;left:968.2px;top:451.8px;height:16px;line-height:16px;color:#000;transform:scaleX(0.966);">[-Ts-] SlipKnoT</span>
<svg style="left:950px;top:469px" width="16" height="16" viewBox="0 0 16 16"><path d="M8 0.7Q11.4 2 15 1.8Q15.4 10.6 8 15.4Q0.6 10.6 1 1.8Q4.6 2 8 0.7Z" fill="url(#sg)" stroke="#5a4206" stroke-width="1.3" stroke-linejoin="round"/><path d="M3.9 5.5Q8 2.8 12.1 5.5" fill="none" stroke="#fffbe6" stroke-width="1.5" stroke-linecap="round"/><path d="M4.9 8Q8 5.8 11.1 8" fill="none" stroke="#fffbe6" stroke-width="1.3" stroke-linecap="round"/><circle cx="8" cy="10.7" r="2" fill="#f6d640" stroke="#5a4206" stroke-width=".9"/><circle cx="8" cy="10.7" r=".7" fill="#5a4206"/></svg>
<span class="t" style="font:11px 'Liberation Sans',sans-serif;left:968.2px;top:469.8px;height:16px;line-height:16px;color:#000;transform:scaleX(0.995);">«{Co}» Sexacutioner</span>
<span class="t" style="font:12px 'Liberation Sans',sans-serif;left:958.4px;top:491.6px;height:16px;line-height:16px;color:#2c50a2;transform:scaleX(0.937);">Friends</span>
<div class="a" style="left:1000px;top:500px;width:243px;height:1px;background:linear-gradient(90deg,#b4c0da 0%,#c6d0e4 80%,#e6ebf4 100%)"></div>
<svg style="left:950px;top:511px" width="16" height="16" viewBox="0 0 16 16"><g transform="translate(5.6 -0.6) scale(0.66)"><path d="M1 12.4L3.6 8.4L6 7.2H10L12.4 8.4L15 12.4L13.2 14.7H2.8Z" fill="#6cb84e" stroke="#3d7f28" stroke-width=".9" stroke-linejoin="round"/><ellipse cx="8" cy="11" rx="3.6" ry="2.3" fill="#b4e49c" opacity=".8"/><rect x=".8" y="11.4" width="1.7" height="2.2" rx=".6" fill="#f5d3a0" stroke="#9a6d43" stroke-width=".35"/><rect x="13.5" y="11.4" width="1.7" height="2.2" rx=".6" fill="#f5d3a0" stroke="#9a6d43" stroke-width=".35"/><path d="M4.7 4.6Q4.7 8.4 8 8.4Q11.3 8.4 11.3 4.6Z" fill="#f5d3a0" stroke="#b98a55" stroke-width=".35"/><path d="M4.2 5.6Q3.8 1 8 1Q12.2 1 11.8 5.6Q10.8 3.9 8.6 4.2Q6 4.5 4.2 5.6Z" fill="#c59a3e"/><path d="M5.2 2.6Q8 1.2 10.8 2.6Q8 2.2 5.2 2.6Z" fill="#dcb85c"/></g><g transform="translate(-0.2 3.4) scale(0.78)"><path d="M1 12.4L3.6 8.4L6 7.2H10L12.4 8.4L15 12.4L13.2 14.7H2.8Z" fill="#3b8df0" stroke="#2b63b8" stroke-width=".9" stroke-linejoin="round"/><ellipse cx="8" cy="11" rx="3.6" ry="2.3" fill="#9fd0fb" opacity=".8"/><rect x=".8" y="11.4" width="1.7" height="2.2" rx=".6" fill="#f8d2a0" stroke="#9a6d43" stroke-width=".35"/><rect x="13.5" y="11.4" width="1.7" height="2.2" rx=".6" fill="#f8d2a0" stroke="#9a6d43" stroke-width=".35"/><path d="M4.7 4.6Q4.7 8.4 8 8.4Q11.3 8.4 11.3 4.6Z" fill="#f8d2a0" stroke="#b98a55" stroke-width=".35"/><path d="M4.2 5.6Q3.8 1 8 1Q12.2 1 11.8 5.6Q10.8 3.9 8.6 4.2Q6 4.5 4.2 5.6Z" fill="#8c4a1e"/><path d="M5.2 2.6Q8 1.2 10.8 2.6Q8 2.2 5.2 2.6Z" fill="#b5672c"/></g></svg>
<span class="t" style="font:11px 'Liberation Sans',sans-serif;left:968.2px;top:511.8px;height:16px;line-height:16px;color:#000;transform:scaleX(0.967);">{ I } MeClubYouLongTime</span>
<svg style="left:950px;top:529px" width="16" height="16" viewBox="0 0 16 16"><g transform="translate(5.6 -0.6) scale(0.66)"><path d="M1 12.4L3.6 8.4L6 7.2H10L12.4 8.4L15 12.4L13.2 14.7H2.8Z" fill="#6cb84e" stroke="#3d7f28" stroke-width=".9" stroke-linejoin="round"/><ellipse cx="8" cy="11" rx="3.6" ry="2.3" fill="#b4e49c" opacity=".8"/><rect x=".8" y="11.4" width="1.7" height="2.2" rx=".6" fill="#f5d3a0" stroke="#9a6d43" stroke-width=".35"/><rect x="13.5" y="11.4" width="1.7" height="2.2" rx=".6" fill="#f5d3a0" stroke="#9a6d43" stroke-width=".35"/><path d="M4.7 4.6Q4.7 8.4 8 8.4Q11.3 8.4 11.3 4.6Z" fill="#f5d3a0" stroke="#b98a55" stroke-width=".35"/><path d="M4.2 5.6Q3.8 1 8 1Q12.2 1 11.8 5.6Q10.8 3.9 8.6 4.2Q6 4.5 4.2 5.6Z" fill="#c59a3e"/><path d="M5.2 2.6Q8 1.2 10.8 2.6Q8 2.2 5.2 2.6Z" fill="#dcb85c"/></g><g transform="translate(-0.2 3.4) scale(0.78)"><path d="M1 12.4L3.6 8.4L6 7.2H10L12.4 8.4L15 12.4L13.2 14.7H2.8Z" fill="#3b8df0" stroke="#2b63b8" stroke-width=".9" stroke-linejoin="round"/><ellipse cx="8" cy="11" rx="3.6" ry="2.3" fill="#9fd0fb" opacity=".8"/><rect x=".8" y="11.4" width="1.7" height="2.2" rx=".6" fill="#f8d2a0" stroke="#9a6d43" stroke-width=".35"/><rect x="13.5" y="11.4" width="1.7" height="2.2" rx=".6" fill="#f8d2a0" stroke="#9a6d43" stroke-width=".35"/><path d="M4.7 4.6Q4.7 8.4 8 8.4Q11.3 8.4 11.3 4.6Z" fill="#f8d2a0" stroke="#b98a55" stroke-width=".35"/><path d="M4.2 5.6Q3.8 1 8 1Q12.2 1 11.8 5.6Q10.8 3.9 8.6 4.2Q6 4.5 4.2 5.6Z" fill="#8c4a1e"/><path d="M5.2 2.6Q8 1.2 10.8 2.6Q8 2.2 5.2 2.6Z" fill="#b5672c"/></g></svg>
<span class="t" style="font:11px 'Liberation Sans',sans-serif;left:968.2px;top:529.8px;height:16px;line-height:16px;color:#000;transform:scaleX(1.056);">{***}BRiAN</span>
<svg style="left:950px;top:547px" width="16" height="16" viewBox="0 0 16 16"><text x="-0.6" y="14.6" font-family="Liberation Sans,sans-serif" font-weight="bold" font-size="14.5" fill="#14285f" stroke="#14285f" stroke-width=".7" textLength="9.6" lengthAdjust="spacingAndGlyphs">Z</text><text x="9" y="8.2" font-family="Liberation Sans,sans-serif" font-weight="bold" font-size="9.5" fill="#14285f" stroke="#14285f" stroke-width=".5" textLength="6.4" lengthAdjust="spacingAndGlyphs">z</text></svg>
<span class="t" style="font:11px 'Liberation Sans',sans-serif;left:968.2px;top:547.8px;height:16px;line-height:16px;color:#000;">«{Co}» TheArseofWar</span>
<svg style="left:950px;top:565px" width="16" height="16" viewBox="0 0 16 16"><g transform="translate(5.6 -0.6) scale(0.66)"><path d="M1 12.4L3.6 8.4L6 7.2H10L12.4 8.4L15 12.4L13.2 14.7H2.8Z" fill="#6cb84e" stroke="#3d7f28" stroke-width=".9" stroke-linejoin="round"/><ellipse cx="8" cy="11" rx="3.6" ry="2.3" fill="#b4e49c" opacity=".8"/><rect x=".8" y="11.4" width="1.7" height="2.2" rx=".6" fill="#f5d3a0" stroke="#9a6d43" stroke-width=".35"/><rect x="13.5" y="11.4" width="1.7" height="2.2" rx=".6" fill="#f5d3a0" stroke="#9a6d43" stroke-width=".35"/><path d="M4.7 4.6Q4.7 8.4 8 8.4Q11.3 8.4 11.3 4.6Z" fill="#f5d3a0" stroke="#b98a55" stroke-width=".35"/><path d="M4.2 5.6Q3.8 1 8 1Q12.2 1 11.8 5.6Q10.8 3.9 8.6 4.2Q6 4.5 4.2 5.6Z" fill="#c59a3e"/><path d="M5.2 2.6Q8 1.2 10.8 2.6Q8 2.2 5.2 2.6Z" fill="#dcb85c"/></g><g transform="translate(-0.2 3.4) scale(0.78)"><path d="M1 12.4L3.6 8.4L6 7.2H10L12.4 8.4L15 12.4L13.2 14.7H2.8Z" fill="#3b8df0" stroke="#2b63b8" stroke-width=".9" stroke-linejoin="round"/><ellipse cx="8" cy="11" rx="3.6" ry="2.3" fill="#9fd0fb" opacity=".8"/><rect x=".8" y="11.4" width="1.7" height="2.2" rx=".6" fill="#f8d2a0" stroke="#9a6d43" stroke-width=".35"/><rect x="13.5" y="11.4" width="1.7" height="2.2" rx=".6" fill="#f8d2a0" stroke="#9a6d43" stroke-width=".35"/><path d="M4.7 4.6Q4.7 8.4 8 8.4Q11.3 8.4 11.3 4.6Z" fill="#f8d2a0" stroke="#b98a55" stroke-width=".35"/><path d="M4.2 5.6Q3.8 1 8 1Q12.2 1 11.8 5.6Q10.8 3.9 8.6 4.2Q6 4.5 4.2 5.6Z" fill="#8c4a1e"/><path d="M5.2 2.6Q8 1.2 10.8 2.6Q8 2.2 5.2 2.6Z" fill="#b5672c"/></g></svg>
<span class="t" style="font:11px 'Liberation Sans',sans-serif;left:968.2px;top:565.8px;height:16px;line-height:16px;color:#000;transform:scaleX(0.908);">AOE_HANDLAMP [P]</span>
<svg style="left:950px;top:583px" width="16" height="16" viewBox="0 0 16 16"><g transform="translate(5.6 -0.6) scale(0.66)"><path d="M1 12.4L3.6 8.4L6 7.2H10L12.4 8.4L15 12.4L13.2 14.7H2.8Z" fill="#6cb84e" stroke="#3d7f28" stroke-width=".9" stroke-linejoin="round"/><ellipse cx="8" cy="11" rx="3.6" ry="2.3" fill="#b4e49c" opacity=".8"/><rect x=".8" y="11.4" width="1.7" height="2.2" rx=".6" fill="#f5d3a0" stroke="#9a6d43" stroke-width=".35"/><rect x="13.5" y="11.4" width="1.7" height="2.2" rx=".6" fill="#f5d3a0" stroke="#9a6d43" stroke-width=".35"/><path d="M4.7 4.6Q4.7 8.4 8 8.4Q11.3 8.4 11.3 4.6Z" fill="#f5d3a0" stroke="#b98a55" stroke-width=".35"/><path d="M4.2 5.6Q3.8 1 8 1Q12.2 1 11.8 5.6Q10.8 3.9 8.6 4.2Q6 4.5 4.2 5.6Z" fill="#c59a3e"/><path d="M5.2 2.6Q8 1.2 10.8 2.6Q8 2.2 5.2 2.6Z" fill="#dcb85c"/></g><g transform="translate(-0.2 3.4) scale(0.78)"><path d="M1 12.4L3.6 8.4L6 7.2H10L12.4 8.4L15 12.4L13.2 14.7H2.8Z" fill="#3b8df0" stroke="#2b63b8" stroke-width=".9" stroke-linejoin="round"/><ellipse cx="8" cy="11" rx="3.6" ry="2.3" fill="#9fd0fb" opacity=".8"/><rect x=".8" y="11.4" width="1.7" height="2.2" rx=".6" fill="#f8d2a0" stroke="#9a6d43" stroke-width=".35"/><rect x="13.5" y="11.4" width="1.7" height="2.2" rx=".6" fill="#f8d2a0" stroke="#9a6d43" stroke-width=".35"/><path d="M4.7 4.6Q4.7 8.4 8 8.4Q11.3 8.4 11.3 4.6Z" fill="#f8d2a0" stroke="#b98a55" stroke-width=".35"/><path d="M4.2 5.6Q3.8 1 8 1Q12.2 1 11.8 5.6Q10.8 3.9 8.6 4.2Q6 4.5 4.2 5.6Z" fill="#8c4a1e"/><path d="M5.2 2.6Q8 1.2 10.8 2.6Q8 2.2 5.2 2.6Z" fill="#b5672c"/></g></svg>
<span class="t" style="font:11px 'Liberation Sans',sans-serif;left:968.2px;top:583.8px;height:16px;line-height:16px;color:#000;transform:scaleX(0.970);">phoenix</span>
<span class="t" style="font:12px 'Liberation Sans',sans-serif;left:958.4px;top:605.6px;height:16px;line-height:16px;color:#2c50a2;transform:scaleX(0.971);">Donators</span>
<div class="a" style="left:1010px;top:614px;width:233px;height:1px;background:linear-gradient(90deg,#b4c0da 0%,#c6d0e4 80%,#e6ebf4 100%)"></div>
<svg style="left:950px;top:625px" width="16" height="16" viewBox="0 0 16 16"><g transform="translate(-0.6 0) scale(0.96)"><path d="M1 12.4L3.6 8.4L6 7.2H10L12.4 8.4L15 12.4L13.2 14.7H2.8Z" fill="#3b8df0" stroke="#2b63b8" stroke-width=".9" stroke-linejoin="round"/><ellipse cx="8" cy="11" rx="3.6" ry="2.3" fill="#9fd0fb" opacity=".8"/><rect x=".8" y="11.4" width="1.7" height="2.2" rx=".6" fill="#f8d2a0" stroke="#9a6d43" stroke-width=".35"/><rect x="13.5" y="11.4" width="1.7" height="2.2" rx=".6" fill="#f8d2a0" stroke="#9a6d43" stroke-width=".35"/><path d="M4.7 4.6Q4.7 8.4 8 8.4Q11.3 8.4 11.3 4.6Z" fill="#f8d2a0" stroke="#b98a55" stroke-width=".35"/><path d="M4.2 5.6Q3.8 1 8 1Q12.2 1 11.8 5.6Q10.8 3.9 8.6 4.2Q6 4.5 4.2 5.6Z" fill="#8c4a1e"/><path d="M5.2 2.6Q8 1.2 10.8 2.6Q8 2.2 5.2 2.6Z" fill="#b5672c"/></g><circle cx="11.7" cy="12.1" r="3.5" fill="#58b841" stroke="#2d7d1e" stroke-width=".6"/><path d="M11.7 9.9V14.3M9.5 12.1H13.9" stroke="#fff" stroke-width="1.3"/></svg>
<span class="t" style="font:11px 'Liberation Sans',sans-serif;left:968.2px;top:625.8px;height:16px;line-height:16px;color:#000;transform:scaleX(0.936);">cin&amp;go</span>
<span class="t" style="font:12px 'Liberation Sans',sans-serif;left:958.4px;top:647.6px;height:16px;line-height:16px;color:#2c50a2;transform:scaleX(0.881);">Users</span>
<div class="a" style="left:990.3px;top:656px;width:252.7px;height:1px;background:linear-gradient(90deg,#b4c0da 0%,#c6d0e4 80%,#e6ebf4 100%)"></div>
<svg style="left:950px;top:667px" width="16" height="16" viewBox="0 0 16 16"><text x="-0.6" y="14.6" font-family="Liberation Sans,sans-serif" font-weight="bold" font-size="14.5" fill="#14285f" stroke="#14285f" stroke-width=".7" textLength="9.6" lengthAdjust="spacingAndGlyphs">Z</text><text x="9" y="8.2" font-family="Liberation Sans,sans-serif" font-weight="bold" font-size="9.5" fill="#14285f" stroke="#14285f" stroke-width=".5" textLength="6.4" lengthAdjust="spacingAndGlyphs">z</text></svg>
<span class="t" style="font:11px 'Liberation Sans',sans-serif;left:968.2px;top:667.8px;height:16px;line-height:16px;color:#000;transform:scaleX(0.934);">"Black_Hawk"</span>
<svg style="left:950px;top:685px" width="16" height="16" viewBox="0 0 16 16"><g transform="translate(0 0.3) scale(1)"><path d="M1 12.4L3.6 8.4L6 7.2H10L12.4 8.4L15 12.4L13.2 14.7H2.8Z" fill="#3b8df0" stroke="#2b63b8" stroke-width=".9" stroke-linejoin="round"/><ellipse cx="8" cy="11" rx="3.6" ry="2.3" fill="#9fd0fb" opacity=".8"/><rect x=".8" y="11.4" width="1.7" height="2.2" rx=".6" fill="#f8d2a0" stroke="#9a6d43" stroke-width=".35"/><rect x="13.5" y="11.4" width="1.7" height="2.2" rx=".6" fill="#f8d2a0" stroke="#9a6d43" stroke-width=".35"/><path d="M4.7 4.6Q4.7 8.4 8 8.4Q11.3 8.4 11.3 4.6Z" fill="#f8d2a0" stroke="#b98a55" stroke-width=".35"/><path d="M4.2 5.6Q3.8 1 8 1Q12.2 1 11.8 5.6Q10.8 3.9 8.6 4.2Q6 4.5 4.2 5.6Z" fill="#8c4a1e"/><path d="M5.2 2.6Q8 1.2 10.8 2.6Q8 2.2 5.2 2.6Z" fill="#b5672c"/></g></svg>
<span class="t" style="font:11px 'Liberation Sans',sans-serif;left:968.2px;top:685.8px;height:16px;line-height:16px;color:#000;transform:scaleX(0.912);">(CCCP)Super</span>
<svg style="left:950px;top:703px" width="16" height="16" viewBox="0 0 16 16"><g transform="translate(0 0.3) scale(1)"><path d="M1 12.4L3.6 8.4L6 7.2H10L12.4 8.4L15 12.4L13.2 14.7H2.8Z" fill="#3b8df0" stroke="#2b63b8" stroke-width=".9" stroke-linejoin="round"/><ellipse cx="8" cy="11" rx="3.6" ry="2.3" fill="#9fd0fb" opacity=".8"/><rect x=".8" y="11.4" width="1.7" height="2.2" rx=".6" fill="#f8d2a0" stroke="#9a6d43" stroke-width=".35"/><rect x="13.5" y="11.4" width="1.7" height="2.2" rx=".6" fill="#f8d2a0" stroke="#9a6d43" stroke-width=".35"/><path d="M4.7 4.6Q4.7 8.4 8 8.4Q11.3 8.4 11.3 4.6Z" fill="#f8d2a0" stroke="#b98a55" stroke-width=".35"/><path d="M4.2 5.6Q3.8 1 8 1Q12.2 1 11.8 5.6Q10.8 3.9 8.6 4.2Q6 4.5 4.2 5.6Z" fill="#8c4a1e"/><path d="M5.2 2.6Q8 1.2 10.8 2.6Q8 2.2 5.2 2.6Z" fill="#b5672c"/></g></svg>
<span class="t" style="font:11px 'Liberation Sans',sans-serif;left:968.2px;top:703.8px;height:16px;line-height:16px;color:#000;transform:scaleX(0.943);">(HDF) Johnson</span>
<svg style="left:950px;top:721px" width="16" height="16" viewBox="0 0 16 16"><g transform="translate(0 0.3) scale(1)"><path d="M1 12.4L3.6 8.4L6 7.2H10L12.4 8.4L15 12.4L13.2 14.7H2.8Z" fill="#3b8df0" stroke="#2b63b8" stroke-width=".9" stroke-linejoin="round"/><ellipse cx="8" cy="11" rx="3.6" ry="2.3" fill="#9fd0fb" opacity=".8"/><rect x=".8" y="11.4" width="1.7" height="2.2" rx=".6" fill="#f8d2a0" stroke="#9a6d43" stroke-width=".35"/><rect x="13.5" y="11.4" width="1.7" height="2.2" rx=".6" fill="#f8d2a0" stroke="#9a6d43" stroke-width=".35"/><path d="M4.7 4.6Q4.7 8.4 8 8.4Q11.3 8.4 11.3 4.6Z" fill="#f8d2a0" stroke="#b98a55" stroke-width=".35"/><path d="M4.2 5.6Q3.8 1 8 1Q12.2 1 11.8 5.6Q10.8 3.9 8.6 4.2Q6 4.5 4.2 5.6Z" fill="#8c4a1e"/><path d="M5.2 2.6Q8 1.2 10.8 2.6Q8 2.2 5.2 2.6Z" fill="#b5672c"/></g></svg>
<span class="t" style="font:11px 'Liberation Sans',sans-serif;left:968.2px;top:721.8px;height:16px;line-height:16px;color:#000;transform:scaleX(1.023);">*ïß_¤ ©ù®ąßï©д ¤ ™</span>
<svg style="left:950px;top:739px" width="16" height="16" viewBox="0 0 16 16"><g transform="translate(0 0.3) scale(1)"><path d="M1 12.4L3.6 8.4L6 7.2H10L12.4 8.4L15 12.4L13.2 14.7H2.8Z" fill="#3b8df0" stroke="#2b63b8" stroke-width=".9" stroke-linejoin="round"/><ellipse cx="8" cy="11" rx="3.6" ry="2.3" fill="#9fd0fb" opacity=".8"/><rect x=".8" y="11.4" width="1.7" height="2.2" rx=".6" fill="#f8d2a0" stroke="#9a6d43" stroke-width=".35"/><rect x="13.5" y="11.4" width="1.7" height="2.2" rx=".6" fill="#f8d2a0" stroke="#9a6d43" stroke-width=".35"/><path d="M4.7 4.6Q4.7 8.4 8 8.4Q11.3 8.4 11.3 4.6Z" fill="#f8d2a0" stroke="#b98a55" stroke-width=".35"/><path d="M4.2 5.6Q3.8 1 8 1Q12.2 1 11.8 5.6Q10.8 3.9 8.6 4.2Q6 4.5 4.2 5.6Z" fill="#8c4a1e"/><path d="M5.2 2.6Q8 1.2 10.8 2.6Q8 2.2 5.2 2.6Z" fill="#b5672c"/></g></svg>
<span class="t" style="font:11px 'Liberation Sans',sans-serif;left:968.2px;top:739.8px;height:16px;line-height:16px;color:#000;transform:scaleX(0.989);">.          Angel</span>
<svg style="left:950px;top:757px" width="16" height="16" viewBox="0 0 16 16"><g transform="translate(0 0.3) scale(1)"><path d="M1 12.4L3.6 8.4L6 7.2H10L12.4 8.4L15 12.4L13.2 14.7H2.8Z" fill="#3b8df0" stroke="#2b63b8" stroke-width=".9" stroke-linejoin="round"/><ellipse cx="8" cy="11" rx="3.6" ry="2.3" fill="#9fd0fb" opacity=".8"/><rect x=".8" y="11.4" width="1.7" height="2.2" rx=".6" fill="#f8d2a0" stroke="#9a6d43" stroke-width=".35"/><rect x="13.5" y="11.4" width="1.7" height="2.2" rx=".6" fill="#f8d2a0" stroke="#9a6d43" stroke-width=".35"/><path d="M4.7 4.6Q4.7 8.4 8 8.4Q11.3 8.4 11.3 4.6Z" fill="#f8d2a0" stroke="#b98a55" stroke-width=".35"/><path d="M4.2 5.6Q3.8 1 8 1Q12.2 1 11.8 5.6Q10.8 3.9 8.6 4.2Q6 4.5 4.2 5.6Z" fill="#8c4a1e"/><path d="M5.2 2.6Q8 1.2 10.8 2.6Q8 2.2 5.2 2.6Z" fill="#b5672c"/></g></svg>
<span class="t" style="font:11px 'Liberation Sans',sans-serif;left:968.2px;top:757.8px;height:16px;line-height:16px;color:#000;">.&lt;BG&gt;*_FirePlay_.</span>
<svg style="left:950px;top:775px" width="16" height="16" viewBox="0 0 16 16"><g transform="translate(0 0.3) scale(1)"><path d="M1 12.4L3.6 8.4L6 7.2H10L12.4 8.4L15 12.4L13.2 14.7H2.8Z" fill="#3b8df0" stroke="#2b63b8" stroke-width=".9" stroke-linejoin="round"/><ellipse cx="8" cy="11" rx="3.6" ry="2.3" fill="#9fd0fb" opacity=".8"/><rect x=".8" y="11.4" width="1.7" height="2.2" rx=".6" fill="#f8d2a0" stroke="#9a6d43" stroke-width=".35"/><rect x="13.5" y="11.4" width="1.7" height="2.2" rx=".6" fill="#f8d2a0" stroke="#9a6d43" stroke-width=".35"/><path d="M4.7 4.6Q4.7 8.4 8 8.4Q11.3 8.4 11.3 4.6Z" fill="#f8d2a0" stroke="#b98a55" stroke-width=".35"/><path d="M4.2 5.6Q3.8 1 8 1Q12.2 1 11.8 5.6Q10.8 3.9 8.6 4.2Q6 4.5 4.2 5.6Z" fill="#8c4a1e"/><path d="M5.2 2.6Q8 1.2 10.8 2.6Q8 2.2 5.2 2.6Z" fill="#b5672c"/></g></svg>
<span class="t" style="font:11px 'Liberation Sans',sans-serif;left:968.2px;top:775.8px;height:16px;line-height:16px;color:#000;transform:scaleX(1.009);">[¤Ra̅y̲̅m̲̅a̅и̅¤]</span>
<svg style="left:950px;top:793px" width="16" height="16" viewBox="0 0 16 16"><g transform="translate(0 0.3) scale(1)"><path d="M1 12.4L3.6 8.4L6 7.2H10L12.4 8.4L15 12.4L13.2 14.7H2.8Z" fill="#3b8df0" stroke="#2b63b8" stroke-width=".9" stroke-linejoin="round"/><ellipse cx="8" cy="11" rx="3.6" ry="2.3" fill="#9fd0fb" opacity=".8"/><rect x=".8" y="11.4" width="1.7" height="2.2" rx=".6" fill="#f8d2a0" stroke="#9a6d43" stroke-width=".35"/><rect x="13.5" y="11.4" width="1.7" height="2.2" rx=".6" fill="#f8d2a0" stroke="#9a6d43" stroke-width=".35"/><path d="M4.7 4.6Q4.7 8.4 8 8.4Q11.3 8.4 11.3 4.6Z" fill="#f8d2a0" stroke="#b98a55" stroke-width=".35"/><path d="M4.2 5.6Q3.8 1 8 1Q12.2 1 11.8 5.6Q10.8 3.9 8.6 4.2Q6 4.5 4.2 5.6Z" fill="#8c4a1e"/><path d="M5.2 2.6Q8 1.2 10.8 2.6Q8 2.2 5.2 2.6Z" fill="#b5672c"/></g></svg>
<span class="t" style="font:11px 'Liberation Sans',sans-serif;left:968.2px;top:793.8px;height:16px;line-height:16px;color:#000;transform:scaleX(0.978);">[AoH] Bullet</span>
<svg style="left:950px;top:811px" width="16" height="16" viewBox="0 0 16 16"><g transform="translate(0 0.3) scale(1)"><path d="M1 12.4L3.6 8.4L6 7.2H10L12.4 8.4L15 12.4L13.2 14.7H2.8Z" fill="#3b8df0" stroke="#2b63b8" stroke-width=".9" stroke-linejoin="round"/><ellipse cx="8" cy="11" rx="3.6" ry="2.3" fill="#9fd0fb" opacity=".8"/><rect x=".8" y="11.4" width="1.7" height="2.2" rx=".6" fill="#f8d2a0" stroke="#9a6d43" stroke-width=".35"/><rect x="13.5" y="11.4" width="1.7" height="2.2" rx=".6" fill="#f8d2a0" stroke="#9a6d43" stroke-width=".35"/><path d="M4.7 4.6Q4.7 8.4 8 8.4Q11.3 8.4 11.3 4.6Z" fill="#f8d2a0" stroke="#b98a55" stroke-width=".35"/><path d="M4.2 5.6Q3.8 1 8 1Q12.2 1 11.8 5.6Q10.8 3.9 8.6 4.2Q6 4.5 4.2 5.6Z" fill="#8c4a1e"/><path d="M5.2 2.6Q8 1.2 10.8 2.6Q8 2.2 5.2 2.6Z" fill="#b5672c"/></g></svg>
<span class="t" style="font:11px 'Liberation Sans',sans-serif;left:968.2px;top:811.8px;height:16px;line-height:16px;color:#000;transform:scaleX(1.010);">[AoH] cliffy</span>
<svg style="left:950px;top:829px" width="16" height="16" viewBox="0 0 16 16"><g transform="translate(0 0.3) scale(1)"><path d="M1 12.4L3.6 8.4L6 7.2H10L12.4 8.4L15 12.4L13.2 14.7H2.8Z" fill="#3b8df0" stroke="#2b63b8" stroke-width=".9" stroke-linejoin="round"/><ellipse cx="8" cy="11" rx="3.6" ry="2.3" fill="#9fd0fb" opacity=".8"/><rect x=".8" y="11.4" width="1.7" height="2.2" rx=".6" fill="#f8d2a0" stroke="#9a6d43" stroke-width=".35"/><rect x="13.5" y="11.4" width="1.7" height="2.2" rx=".6" fill="#f8d2a0" stroke="#9a6d43" stroke-width=".35"/><path d="M4.7 4.6Q4.7 8.4 8 8.4Q11.3 8.4 11.3 4.6Z" fill="#f8d2a0" stroke="#b98a55" stroke-width=".35"/><path d="M4.2 5.6Q3.8 1 8 1Q12.2 1 11.8 5.6Q10.8 3.9 8.6 4.2Q6 4.5 4.2 5.6Z" fill="#8c4a1e"/><path d="M5.2 2.6Q8 1.2 10.8 2.6Q8 2.2 5.2 2.6Z" fill="#b5672c"/></g></svg>
<span class="t" style="font:11px 'Liberation Sans',sans-serif;left:968.2px;top:829.8px;height:16px;line-height:16px;color:#000;">[EOD]~Josh~[General]</span>
<svg style="left:950px;top:847px" width="16" height="16" viewBox="0 0 16 16"><g transform="translate(0 0.3) scale(1)"><path d="M1 12.4L3.6 8.4L6 7.2H10L12.4 8.4L15 12.4L13.2 14.7H2.8Z" fill="#3b8df0" stroke="#2b63b8" stroke-width=".9" stroke-linejoin="round"/><ellipse cx="8" cy="11" rx="3.6" ry="2.3" fill="#9fd0fb" opacity=".8"/><rect x=".8" y="11.4" width="1.7" height="2.2" rx=".6" fill="#f8d2a0" stroke="#9a6d43" stroke-width=".35"/><rect x="13.5" y="11.4" width="1.7" height="2.2" rx=".6" fill="#f8d2a0" stroke="#9a6d43" stroke-width=".35"/><path d="M4.7 4.6Q4.7 8.4 8 8.4Q11.3 8.4 11.3 4.6Z" fill="#f8d2a0" stroke="#b98a55" stroke-width=".35"/><path d="M4.2 5.6Q3.8 1 8 1Q12.2 1 11.8 5.6Q10.8 3.9 8.6 4.2Q6 4.5 4.2 5.6Z" fill="#8c4a1e"/><path d="M5.2 2.6Q8 1.2 10.8 2.6Q8 2.2 5.2 2.6Z" fill="#b5672c"/></g></svg>
<span class="t" style="font:11px 'Liberation Sans',sans-serif;left:968.2px;top:847.8px;height:16px;line-height:16px;color:#000;transform:scaleX(0.958);">[GodTM] -DeStRoYeR-</span>
<svg style="left:950px;top:865px" width="16" height="16" viewBox="0 0 16 16"><g transform="translate(0 0.3) scale(1)"><path d="M1 12.4L3.6 8.4L6 7.2H10L12.4 8.4L15 12.4L13.2 14.7H2.8Z" fill="#3b8df0" stroke="#2b63b8" stroke-width=".9" stroke-linejoin="round"/><ellipse cx="8" cy="11" rx="3.6" ry="2.3" fill="#9fd0fb" opacity=".8"/><rect x=".8" y="11.4" width="1.7" height="2.2" rx=".6" fill="#f8d2a0" stroke="#9a6d43" stroke-width=".35"/><rect x="13.5" y="11.4" width="1.7" height="2.2" rx=".6" fill="#f8d2a0" stroke="#9a6d43" stroke-width=".35"/><path d="M4.7 4.6Q4.7 8.4 8 8.4Q11.3 8.4 11.3 4.6Z" fill="#f8d2a0" stroke="#b98a55" stroke-width=".35"/><path d="M4.2 5.6Q3.8 1 8 1Q12.2 1 11.8 5.6Q10.8 3.9 8.6 4.2Q6 4.5 4.2 5.6Z" fill="#8c4a1e"/><path d="M5.2 2.6Q8 1.2 10.8 2.6Q8 2.2 5.2 2.6Z" fill="#b5672c"/></g></svg>
<span class="t" style="font:11px 'Liberation Sans',sans-serif;left:968.2px;top:865.8px;height:16px;line-height:16px;color:#000;transform:scaleX(0.963);">[pg]GodASu</span>
<svg style="left:950px;top:883px" width="16" height="16" viewBox="0 0 16 16"><g transform="translate(0 0.3) scale(1)"><path d="M1 12.4L3.6 8.4L6 7.2H10L12.4 8.4L15 12.4L13.2 14.7H2.8Z" fill="#3b8df0" stroke="#2b63b8" stroke-width=".9" stroke-linejoin="round"/><ellipse cx="8" cy="11" rx="3.6" ry="2.3" fill="#9fd0fb" opacity=".8"/><rect x=".8" y="11.4" width="1.7" height="2.2" rx=".6" fill="#f8d2a0" stroke="#9a6d43" stroke-width=".35"/><rect x="13.5" y="11.4" width="1.7" height="2.2" rx=".6" fill="#f8d2a0" stroke="#9a6d43" stroke-width=".35"/><path d="M4.7 4.6Q4.7 8.4 8 8.4Q11.3 8.4 11.3 4.6Z" fill="#f8d2a0" stroke="#b98a55" stroke-width=".35"/><path d="M4.2 5.6Q3.8 1 8 1Q12.2 1 11.8 5.6Q10.8 3.9 8.6 4.2Q6 4.5 4.2 5.6Z" fill="#8c4a1e"/><path d="M5.2 2.6Q8 1.2 10.8 2.6Q8 2.2 5.2 2.6Z" fill="#b5672c"/></g></svg>
<span class="t" style="font:11px 'Liberation Sans',sans-serif;left:968.2px;top:883.8px;height:16px;line-height:16px;color:#000;transform:scaleX(1.032);">[-Ts-] Wolvy</span>
<svg style="left:950px;top:901px" width="16" height="16" viewBox="0 0 16 16"><g transform="translate(0 0.3) scale(1)"><path d="M1 12.4L3.6 8.4L6 7.2H10L12.4 8.4L15 12.4L13.2 14.7H2.8Z" fill="#3b8df0" stroke="#2b63b8" stroke-width=".9" stroke-linejoin="round"/><ellipse cx="8" cy="11" rx="3.6" ry="2.3" fill="#9fd0fb" opacity=".8"/><rect x=".8" y="11.4" width="1.7" height="2.2" rx=".6" fill="#f8d2a0" stroke="#9a6d43" stroke-width=".35"/><rect x="13.5" y="11.4" width="1.7" height="2.2" rx=".6" fill="#f8d2a0" stroke="#9a6d43" stroke-width=".35"/><path d="M4.7 4.6Q4.7 8.4 8 8.4Q11.3 8.4 11.3 4.6Z" fill="#f8d2a0" stroke="#b98a55" stroke-width=".35"/><path d="M4.2 5.6Q3.8 1 8 1Q12.2 1 11.8 5.6Q10.8 3.9 8.6 4.2Q6 4.5 4.2 5.6Z" fill="#8c4a1e"/><path d="M5.2 2.6Q8 1.2 10.8 2.6Q8 2.2 5.2 2.6Z" fill="#b5672c"/></g></svg>
<span class="t" style="font:11px 'Liberation Sans',sans-serif;left:968.2px;top:901.8px;height:16px;line-height:16px;color:#000;transform:scaleX(1.098);">]▯[-Ve2Tyj-][-MW-]▯[</span>
<div class="a" style="left:968.5px;top:778px;width:59.5px;height:12.2px;border:1px solid #222;border-left:0;border-right:0"></div>
<div class="a" style="left:1253px;top:412px;width:17px;height:508px;background:linear-gradient(90deg,#e3e3e3 0%,#ededed 20%,#f2f2f2 60%,#f0f0f0 100%)"><svg style="left:0;top:0" width="17" height="17" viewBox="0 0 17 17"><path d="M4.9 10.2L8.8 6.2L12.7 10.2Z" fill="#4a4f58"/></svg><svg style="left:0;top:491px" width="17" height="17" viewBox="0 0 17 17"><path d="M4.9 6.8L8.8 10.8L12.7 6.8Z" fill="#4a4f58"/></svg><div class="a" style="left:1px;top:17.5px;width:15px;height:113px;border:1px solid #959595;border-radius:2px;background:linear-gradient(90deg,#f6f6f6 0%,#e9e9ea 45%,#d4d5d7 55%,#c9cacc 100%);box-shadow:inset 0 0 0 1px rgba(255,255,255,.7)"></div><div class="a" style="left:5px;top:71.5px;width:7px;height:1px;background:#6b6f75"></div><div class="a" style="left:5px;top:73.5px;width:7px;height:1px;background:#6b6f75"></div><div class="a" style="left:5px;top:75.5px;width:7px;height:1px;background:#6b6f75"></div></div>
<div class="a" style="left:0px;top:930px;width:1280px;height:30px;background:linear-gradient(#7c8084 0px,#a0a3a5 1.5px,#7d8083 2.6px,#6c6f72 6px,#505259 10.5px,#3a3c45 14.7px,#04070b 15.2px,#05080b 22px,#0b0d10 30px)"></div>
<svg style="left:8.8px;top:926px" width="42.4" height="42.4" viewBox="0 0 42.4 42.4"><defs><radialGradient id="ob" cx="50%" cy="85%" r="70%"><stop offset="0" stop-color="#2fd0ff"/><stop offset=".45" stop-color="#1476c8"/><stop offset="1" stop-color="#0e3a74"/></radialGradient><linearGradient id="oh" x1="0" y1="0" x2="0" y2="1"><stop offset="0" stop-color="#e8eefc" stop-opacity=".95"/><stop offset="1" stop-color="#b8cbe8" stop-opacity=".55"/></linearGradient></defs><circle cx="21.2" cy="21.2" r="21" fill="#081a30"/><circle cx="21.2" cy="21.2" r="18.8" fill="url(#ob)" stroke="#4f86bd" stroke-width=".9"/><path d="M2.8 19.6A18.4 18.4 0 0 1 39.6 19.6Q30 17.8 21.2 20.4Q12.4 23 2.8 19.6Z" fill="url(#oh)"/><path d="M11.6 8.2Q17 5.4 22.6 8.4L20.4 17.2Q15.6 14.6 10.4 16.6Z" fill="#f0622a" stroke="#7a3010" stroke-width=".5"/><path d="M23.6 9.4Q27.6 12 32.4 10.2L30.6 19Q26 21 21.6 18.4Z" fill="#8cc63f" stroke="#3e6a12" stroke-width=".5"/><path d="M10 18Q14.8 16 19.8 18.6L17.8 27.4Q13.4 25.2 8.4 27Z" fill="#46b0f4" stroke="#0f4f8c" stroke-width=".5"/><path d="M21 19.6Q25.6 22.2 30.4 20.2L28.6 29.2Q23.8 31.2 19 28.6Z" fill="#fbc12d" stroke="#8a5a08" stroke-width=".5"/></svg>
<div class="a" style="left:64.2px;top:934.6px;width:1.6px;height:1.6px;background:#8e9195;box-shadow:.8px .8px 0 #000"></div><div class="a" style="left:67.4px;top:934.6px;width:1.6px;height:1.6px;background:#8e9195;box-shadow:.8px .8px 0 #000"></div><div class="a" style="left:70.6px;top:934.6px;width:1.6px;height:1.6px;background:#8e9195;box-shadow:.8px .8px 0 #000"></div><div class="a" style="left:64.2px;top:938.6px;width:1.6px;height:1.6px;background:#8e9195;box-shadow:.8px .8px 0 #000"></div><div class="a" style="left:67.4px;top:938.6px;width:1.6px;height:1.6px;background:#8e9195;box-shadow:.8px .8px 0 #000"></div><div class="a" style="left:70.6px;top:938.6px;width:1.6px;height:1.6px;background:#8e9195;box-shadow:.8px .8px 0 #000"></div><div class="a" style="left:64.2px;top:942.6px;width:1.6px;height:1.6px;background:#8e9195;box-shadow:.8px .8px 0 #000"></div><div class="a" style="left:67.4px;top:942.6px;width:1.6px;height:1.6px;background:#8e9195;box-shadow:.8px .8px 0 #000"></div><div class="a" style="left:70.6px;top:942.6px;width:1.6px;height:1.6px;background:#8e9195;box-shadow:.8px .8px 0 #000"></div><div class="a" style="left:64.2px;top:946.6px;width:1.6px;height:1.6px;background:#66696d;box-shadow:.8px .8px 0 #000"></div><div class="a" style="left:67.4px;top:946.6px;width:1.6px;height:1.6px;background:#66696d;box-shadow:.8px .8px 0 #000"></div><div class="a" style="left:70.6px;top:946.6px;width:1.6px;height:1.6px;background:#66696d;box-shadow:.8px .8px 0 #000"></div><div class="a" style="left:64.2px;top:950.6px;width:1.6px;height:1.6px;background:#66696d;box-shadow:.8px .8px 0 #000"></div><div class="a" style="left:67.4px;top:950.6px;width:1.6px;height:1.6px;background:#66696d;box-shadow:.8px .8px 0 #000"></div><div class="a" style="left:70.6px;top:950.6px;width:1.6px;height:1.6px;background:#66696d;box-shadow:.8px .8px 0 #000"></div><div class="a" style="left:64.2px;top:954.6px;width:1.6px;height:1.6px;background:#66696d;box-shadow:.8px .8px 0 #000"></div><div class="a" style="left:67.4px;top:954.6px;width:1.6px;height:1.6px;background:#66696d;box-shadow:.8px .8px 0 #000"></div><div class="a" style="left:70.6px;top:954.6px;width:1.6px;height:1.6px;background:#66696d;box-shadow:.8px .8px 0 #000"></div>
<svg style="left:81px;top:939px" width="16" height="13" viewBox="0 0 16 13"><rect x=".5" y=".5" width="15" height="12" fill="#3f86e0" stroke="#c9d8ef" stroke-width="1"/><rect x="1" y="1" width="14" height="8" fill="#6aa8ec" opacity=".45"/><rect x="1" y="7" width="14" height="5" fill="#2a5fb0" opacity=".6"/><rect x="1.5" y="9.6" width="13" height="2" fill="#2f3b46"/><rect x="2" y="9.2" width="2" height="2" fill="#dfe8f2"/></svg>
<svg style="left:104px;top:939px" width="16" height="13" viewBox="0 0 16 13"><rect x=".5" y=".5" width="15" height="12" fill="#173a8c" stroke="#c9d8ef" stroke-width="1"/><rect x="2.5" y="2.5" width="6" height="4" fill="#e6eefb"/><rect x="5" y="4.5" width="7" height="4.5" fill="#c9daf5" stroke="#173a8c" stroke-width=".6"/><rect x="7.5" y="6.8" width="6.5" height="4.2" fill="#fff" stroke="#173a8c" stroke-width=".6"/></svg>
<svg style="left:144.6px;top:935.8px" width="9" height="7" viewBox="0 0 9 7"><path d="M.8 .8L3.6 3.5L.8 6.2M5 .8L7.8 3.5L5 6.2" fill="none" stroke="#fff" stroke-width="1.7"/></svg>
<div class="a" style="left:162.3px;top:934.6px;width:1.6px;height:1.6px;background:#8e9195;box-shadow:.8px .8px 0 #000"></div><div class="a" style="left:165.5px;top:934.6px;width:1.6px;height:1.6px;background:#8e9195;box-shadow:.8px .8px 0 #000"></div><div class="a" style="left:168.7px;top:934.6px;width:1.6px;height:1.6px;background:#8e9195;box-shadow:.8px .8px 0 #000"></div><div class="a" style="left:162.3px;top:938.6px;width:1.6px;height:1.6px;background:#8e9195;box-shadow:.8px .8px 0 #000"></div><div class="a" style="left:165.5px;top:938.6px;width:1.6px;height:1.6px;background:#8e9195;box-shadow:.8px .8px 0 #000"></div><div class="a" style="left:168.7px;top:938.6px;width:1.6px;height:1.6px;background:#8e9195;box-shadow:.8px .8px 0 #000"></div><div class="a" style="left:162.3px;top:942.6px;width:1.6px;height:1.6px;background:#8e9195;box-shadow:.8px .8px 0 #000"></div><div class="a" style="left:165.5px;top:942.6px;width:1.6px;height:1.6px;background:#8e9195;box-shadow:.8px .8px 0 #000"></div><div class="a" style="left:168.7px;top:942.6px;width:1.6px;height:1.6px;background:#8e9195;box-shadow:.8px .8px 0 #000"></div><div class="a" style="left:162.3px;top:946.6px;width:1.6px;height:1.6px;background:#66696d;box-shadow:.8px .8px 0 #000"></div><div class="a" style="left:165.5px;top:946.6px;width:1.6px;height:1.6px;background:#66696d;box-shadow:.8px .8px 0 #000"></div><div class="a" style="left:168.7px;top:946.6px;width:1.6px;height:1.6px;background:#66696d;box-shadow:.8px .8px 0 #000"></div><div class="a" style="left:162.3px;top:950.6px;width:1.6px;height:1.6px;background:#66696d;box-shadow:.8px .8px 0 #000"></div><div class="a" style="left:165.5px;top:950.6px;width:1.6px;height:1.6px;background:#66696d;box-shadow:.8px .8px 0 #000"></div><div class="a" style="left:168.7px;top:950.6px;width:1.6px;height:1.6px;background:#66696d;box-shadow:.8px .8px 0 #000"></div><div class="a" style="left:162.3px;top:954.6px;width:1.6px;height:1.6px;background:#66696d;box-shadow:.8px .8px 0 #000"></div><div class="a" style="left:165.5px;top:954.6px;width:1.6px;height:1.6px;background:#66696d;box-shadow:.8px .8px 0 #000"></div><div class="a" style="left:168.7px;top:954.6px;width:1.6px;height:1.6px;background:#66696d;box-shadow:.8px .8px 0 #000"></div>
<div class="a" style="left:177.5px;top:932px;width:156px;height:27px;border:1px solid #74787d;border-radius:3px;background:linear-gradient(#1b1d20 0%,#141619 45%,#070809 50%,#0a0b0d 100%);box-shadow:0 0 0 1px #101113"></div>
<svg style="left:187px;top:937.5px" width="16" height="16" viewBox="0 0 16 16"><circle cx="5" cy="4.2" r="3" fill="#a8a070"/><path d="M1 15V11Q1 7.5 5 7.5Q9 7.5 9 11V15Z" fill="#6d7a4a"/><circle cx="10.5" cy="5.2" r="2.8" fill="#c0b27c"/><path d="M6.5 16V12Q6.5 8.6 10.5 8.6Q14.8 8.6 14.8 12V16Z" fill="#9db7d8"/></svg>
<span class="t" style="font:12px 'Liberation Sans',sans-serif;left:207.5px;top:937.5px;height:16px;line-height:16px;color:#fff;transform:scaleX(0.927);">Save-EE Lobby Clien...</span>
<div class="a" style="left:338.8px;top:932px;width:154px;height:27px;border:1px solid #6c7075;border-radius:3px;background:linear-gradient(#54575c 0%,#3a3d41 45%,#0e0f11 50%,#0b0c0d 100%);box-shadow:0 0 0 1px #101113"></div>
<svg style="left:346px;top:937.5px" width="16" height="16" viewBox="0 0 16 16"><circle cx="8" cy="8" r="7.6" fill="#dd4b3a"/><path d="M8 8L1.4 4.2A7.6 7.6 0 0 0 6.6 15.5Z" fill="#1da462"/><path d="M8 8L6.6 15.5A7.6 7.6 0 0 0 15.2 5.6Z" fill="#ffcd40"/><path d="M8 8L15.2 5.6A7.6 7.6 0 0 0 1.4 4.2Z" fill="#dd4b3a"/><circle cx="8" cy="8" r="3.5" fill="#f4f4f4"/><circle cx="8" cy="8" r="2.7" fill="#4a8af4"/></svg>
<span class="t" style="font:12px 'Liberation Sans',sans-serif;left:366.3px;top:937.5px;height:16px;line-height:16px;color:#fff;transform:scaleX(0.959);">Gem Craft Chapter ...</span>
<div class="a" style="left:498px;top:932px;width:155.5px;height:27px;border:1px solid #6c7075;border-radius:3px;background:linear-gradient(#54575c 0%,#3a3d41 45%,#0e0f11 50%,#0b0c0d 100%);box-shadow:0 0 0 1px #101113"></div>
<svg style="left:507px;top:937.5px" width="16" height="16" viewBox="0 0 16 16"><path d="M3 5L6 15H10L13 5Z" fill="#b82a1a"/><path d="M5.2 5L7 15H9L10.8 5Z" fill="#f1ece0"/><path d="M4.2 6L2.4 1.2M7 5.4L6.4 .8M9.4 5.4L10.6 1M11.8 6L14 2" stroke="#e8c05a" stroke-width="1.3"/><circle cx="10.8" cy="1.6" r="1.5" fill="#f4d24a"/></svg>
<span class="t" style="font:12px 'Liberation Sans',sans-serif;left:526.3px;top:937.5px;height:16px;line-height:16px;color:#fff;transform:scaleX(0.982);">arab2.jpg - Paint</span>
<svg style="left:1153px;top:939.5px" width="8" height="10" viewBox="0 0 8 10"><path d="M6.8 .6L1.8 5L6.8 9.4" fill="none" stroke="#f4f4f4" stroke-width="2.5" stroke-linejoin="miter"/></svg>
<svg style="left:1177.5px;top:935.5px" width="16" height="16" viewBox="0 0 16 16"><rect x="4.5" y=".8" width="9.5" height="8" fill="#2a62c0" stroke="#e9eef6" stroke-width="1.1"/><rect x=".8" y="4" width="9.5" height="8" fill="#1d4fa8" stroke="#e9eef6" stroke-width="1.1"/><rect x="2.5" y="12.6" width="6" height="1.4" fill="#e9eef6"/><circle cx="10.6" cy="11.2" r="3.4" fill="#2f8fe6"/><path d="M8.4 10Q10.4 8.2 12.6 9.6Q12 11.4 10.2 11.2Q9.6 12.6 11 14Q8 13.6 8.4 10Z" fill="#5fd04a"/></svg>
<svg style="left:1195.5px;top:936px" width="13" height="15" viewBox="0 0 13 15"><path d="M1 5H3.6L7.2 1V14L3.6 10H1Z" fill="#f4f6f8"/><path d="M9.2 4.6Q11.4 7.5 9.2 10.4" fill="none" stroke="#e8ecf0" stroke-width="1.2"/></svg>
<span class="t" style="font:12px 'Liberation Sans',sans-serif;left:1220.8px;top:936.6px;height:16px;line-height:16px;color:#fff;transform:scaleX(0.931);">2:29 PM</span>
</body></html>
